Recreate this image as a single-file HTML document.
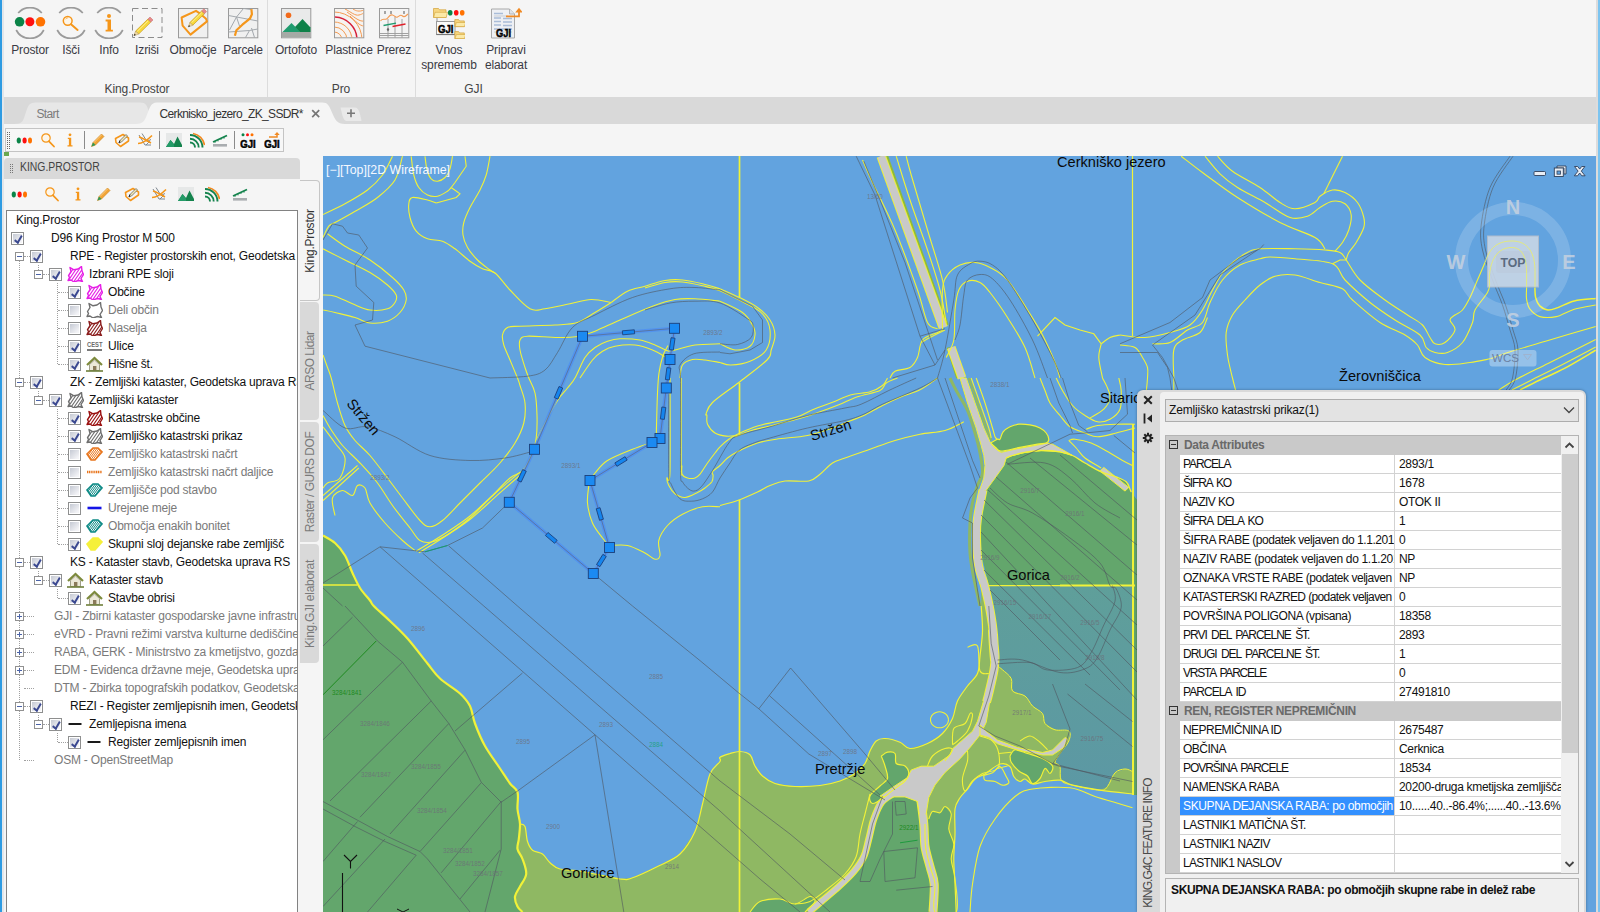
<!DOCTYPE html>
<html lang="sl">
<head>
<meta charset="utf-8">
<title>King.Prostor</title>
<style>
*{box-sizing:border-box;margin:0;padding:0}
html,body{width:1600px;height:912px;overflow:hidden;background:#f5f5f5;font-family:"Liberation Sans","DejaVu Sans",sans-serif;font-size:12px;color:#222}
.abs{position:absolute}
#frameL{left:0;top:0;width:2px;height:912px;background:#2e9be2}
#frameL2{left:2px;top:0;width:2px;height:912px;background:#e2e6ea}
#frameR{left:1598px;top:0;width:2px;height:912px;background:#7cc4f0}
#frameR2{left:1596px;top:0;width:2px;height:912px;background:#dcdcdc}
#ribbon{left:6px;top:0;width:1590px;height:97px;background:#f5f5f5}
.rb{position:absolute;top:0;text-align:center;font-size:12.4px;color:#333;line-height:15px;white-space:nowrap;transform:translateX(-50%)}
.rb svg{display:block;margin:8px auto 0;width:34px;height:34px}
.rb span{display:block;margin-top:1px}
.rsep{position:absolute;top:0;width:1px;height:97px;background:#dcdcdc}
.rgl{position:absolute;top:81.5px;font-size:12px;letter-spacing:-.1px;color:#444;transform:translateX(-50%);white-space:nowrap}
#tabbar{left:2px;top:97px;width:1594px;height:27px;background:#d9d9d9}
#toolrow{left:6px;top:124px;width:1590px;height:32px;background:#f5f5f5}
#tb1{left:4.5px;top:128px;width:279px;height:24px;background:#f7f7f7;border:1px solid #c4c4c4}
#lp{left:4px;top:156px;width:316px;height:756px;background:#f5f5f5}
#lphead{left:4px;top:158px;width:296px;height:21px;background:#d9d9d9;border-radius:4px 4px 0 0;font-size:12px;color:#444;line-height:19px;padding-left:15.500px}
#lphead span{display:inline-block;transform:scaleX(.868);transform-origin:0 50%;white-space:nowrap}
#tree{left:6px;top:210px;width:292px;height:702px;background:#fff;border:1px solid #828282;border-bottom:none;overflow:hidden}
.tr{position:absolute;height:18px;line-height:18px;font-size:12px;letter-spacing:-.2px;white-space:nowrap;color:#111}
.tr.g{color:#7a7a7a}
.cb{position:absolute;width:13px;height:13px;border:1px solid #8e8f8f;background:linear-gradient(135deg,#bfc4cf,#f4f4f7 80%)}
.cb{box-shadow:inset 0 0 0 1px #fff}
.cb.c::after{content:"";position:absolute;left:3.6px;top:1px;width:2.8px;height:6.6px;border:solid #3a4890;border-width:0 2px 2px 0;transform:rotate(38deg) skewX(8deg)}
.ex{position:absolute;width:9px;height:9px;border:1px solid #919191;background:#fff}
.ex::before{content:"";position:absolute;left:1px;top:3px;width:5px;height:1px;background:#4b63a7}
.ex.p::after{content:"";position:absolute;left:3px;top:1px;width:1px;height:5px;background:#4b63a7}
.dv{position:absolute;width:0;border-left:1px dotted #a0a0a0}
.dh{position:absolute;height:0;border-top:1px dotted #a0a0a0}
.stab{position:absolute;left:300px;width:19px;background:#d9d9d9;border-radius:0 4px 4px 0;color:#7a7a7a;font-size:12px;letter-spacing:-.2px}
.stab.act{width:20px;background:#f5f5f5;border:1px solid #c6c6c6;border-left:none;color:#333}
.stab span{position:absolute;left:50%;top:50%;white-space:nowrap;transform:translate(-50%,-50%) rotate(-90deg)}
#map{left:323px;top:156px;width:1273px;height:756px;background:#62a3df;overflow:hidden}
#fi{left:1137px;top:390px;width:449px;height:522px;background:#dadada;border-radius:6px 6px 0 0;box-shadow:0 0 3px rgba(0,0,0,.35)}
#fiin{left:1160px;top:392px;width:424px;height:520px;background:#f0f0f0;border-radius:4px 4px 0 0}
#combo{left:1165px;top:399px;width:414px;height:23px;background:#e3e3e3;border:1px solid #adadad;font-size:12px;letter-spacing:-.16px;line-height:21px;padding-left:3px;color:#111}
#grid{left:1165px;top:435px;width:414px;height:439px;background:#fff;border:1px solid #b4b4b4;overflow:hidden}
.gr{position:absolute;left:14px;width:381px;height:19px;border-bottom:1px solid #d2d2d2;font-size:12px;letter-spacing:-.42px;line-height:18px;color:#111;white-space:nowrap}
.gr b{position:absolute;left:0;top:0;width:215px;height:18px;padding-left:3px;overflow:hidden;font-weight:normal;border-right:1px solid #d2d2d2}
.gr i{letter-spacing:-.32px;position:absolute;left:216px;top:0;width:165px;height:18px;padding-left:3px;overflow:hidden;font-style:normal}
.gh{position:absolute;left:0;width:396px;height:19px;background:#c9c9c9;font-weight:bold;color:#6a6a6a;font-size:12px;letter-spacing:-.35px;line-height:18px;padding-left:18px;white-space:nowrap}
.gm{position:absolute;left:3px;top:4px;width:9px;height:9px;border:1px solid #333;background:#c9c9c9}
.gm::after{content:"";position:absolute;left:1px;top:3px;width:5px;height:1px;background:#333}
#desc{left:1165px;top:878px;width:414px;height:34px;background:#f0f0f0;border:1px solid #b4b4b4;border-bottom:none;font-weight:bold;font-size:12px;letter-spacing:-.37px;color:#111;padding:4px 0 0 5px;white-space:nowrap}

.rl{position:absolute;top:43px;text-align:center;font-size:12px;letter-spacing:-.15px;color:#3a3a44;line-height:15px;white-space:nowrap;transform:translateX(-50%)}
.dtab{font-size:12px;letter-spacing:-.64px;line-height:15px;white-space:nowrap}
.grip{width:3px;background-image:linear-gradient(#8a8a8a 1px,transparent 1px),linear-gradient(90deg,#8a8a8a 1px,transparent 1px);background-size:2px 2px;background-blend-mode:multiply;opacity:.0}
.ti{display:block}
.gr b.sel{background:#3390ff;color:#fff}
</style>
</head>
<body>
<div class="abs" id="ribbon"></div>
<div class="abs" id="tabbar"></div>
<div class="abs" id="toolrow"></div>
<div class="abs" id="lp"></div>
<div class="abs" id="lphead"><span>KING.PROSTOR</span></div>
<svg class="abs" style="left:14px;top:7px" width="32" height="32" viewBox="0 0 32 32"><path d="M4.2 6A15.5 15.5 0 0 1 27.8 6M2.2 23A15.5 15.5 0 0 0 29.8 23" fill="none" stroke="#9b9b9b" stroke-width="1.7"/><circle cx="5.6" cy="14.8" r="4.8" fill="#0b8448"/><circle cx="15.9" cy="14.8" r="4.5" fill="#ff1010"/><circle cx="26.5" cy="14.8" r="4.8" fill="#ff7200"/></svg>
<div class="rl" style="left:30px">Prostor</div>
<svg class="abs" style="left:55px;top:7px" width="32" height="32" viewBox="0 0 32 32"><path d="M4.2 6A15.5 15.5 0 0 1 27.8 6M2.2 23A15.5 15.5 0 0 0 29.8 23" fill="none" stroke="#9b9b9b" stroke-width="1.7"/><circle cx="12.7" cy="13.8" r="4.4" fill="#fdf6ea" stroke="#f5961a" stroke-width="1.5"/><path d="M16 17.3l6.6 5.6" stroke="#f5961a" stroke-width="2" stroke-linecap="round"/><path d="M10.6 12.3a2.6 2.6 0 0 1 2.2-1.4" stroke="#f5961a" stroke-width=".7" fill="none"/></svg>
<div class="rl" style="left:71px">Išči</div>
<svg class="abs" style="left:93px;top:7px" width="32" height="32" viewBox="0 0 32 32"><path d="M4.2 6A15.5 15.5 0 0 1 27.8 6M2.2 23A15.5 15.5 0 0 0 29.8 23" fill="none" stroke="#9b9b9b" stroke-width="1.7"/><circle cx="16" cy="9" r="2" fill="#f5961a"/><path d="M12.600 12.600h5.400v10.200h1.900v1.800h-7.300v-1.800h1.900v-8.400h-1.900z" fill="#f5961a"/></svg>
<div class="rl" style="left:109px">Info</div>
<svg class="abs" style="left:131px;top:7px" width="32" height="32" viewBox="0 0 32 32"><rect x="1.5" y="1.5" width="29.5" height="29" fill="none" stroke="#8c8c8c" stroke-width="1" stroke-dasharray="6 3.5"/><polygon points="4.6,24.1 16.9,12.1 19.8,15.1 7.6,27.1" fill="#f7d83a" stroke="#c89a1a" stroke-width=".7"/><polygon points="16.9,12.1 19.0,10.0 22.0,13.0 19.8,15.1" fill="#e88a8a" stroke="#c06a6a" stroke-width=".5"/><polygon points="2.8,28.8 4.6,24.1 7.6,27.1" fill="#f0d9a0" stroke="#a08040" stroke-width=".4"/><polygon points="2.8,28.8 3.6,26.7 4.9,28.0" fill="#222"/><path d="M6.3 24.3L17.1 13.8" stroke="#fdf0a0" stroke-width=".9"/></svg>
<div class="rl" style="left:147px">Izriši</div>
<svg class="abs" style="left:177px;top:7px" width="32" height="32" viewBox="0 0 32 32"><rect x="1.5" y="1.5" width="29.3" height="29.3" fill="#f0f0f0" stroke="#9a9a9a" stroke-width="1"/><path d="M4.6 10.5L19 3.8l3 2 7 6 1 2.6L13.5 27.6 5.6 18.6z" fill="none" stroke="#f5961a" stroke-width="2" stroke-linejoin="round"/><polygon points="12.9,15.5 24.7,3.9 27.5,6.7 15.7,18.3" fill="#f7d83a" stroke="#c89a1a" stroke-width=".7"/><polygon points="24.7,3.9 26.8,1.8 29.6,4.6 27.5,6.7" fill="#e88a8a" stroke="#c06a6a" stroke-width=".5"/><polygon points="11.2,20.0 12.9,15.5 15.7,18.3" fill="#f0d9a0" stroke="#a08040" stroke-width=".4"/><polygon points="11.2,20.0 12.0,18.0 13.2,19.2" fill="#222"/><path d="M14.5 15.7L24.9 5.5" stroke="#fdf0a0" stroke-width=".9"/></svg>
<div class="rl" style="left:193px">Območje</div>
<svg class="abs" style="left:227px;top:7px" width="32" height="32" viewBox="0 0 32 32"><rect x="1.5" y="1.5" width="29.3" height="29.3" fill="#f0f0f0" stroke="#9a9a9a" stroke-width="1"/><path d="M1.5 8.5L30.8 14M16.5 1.5l-7 8.5-7 13M9.5 10l3 9M1.5 25l21-1.5 8.3-1.5M22.5 23.5l-4 7M24.5 21l3 9.5M16.5 1.5l7.5 1M13 19.5l10-9" fill="none" stroke="#a3a8ad" stroke-width="1"/><path d="M24.4 2.2l.5 5-2 4.5-7.500 6-6 5.500-1.500 5.500" fill="none" stroke="#f5961a" stroke-width="2.2" stroke-linejoin="round"/></svg>
<div class="rl" style="left:243px">Parcele</div>
<svg class="abs" style="left:280px;top:7px" width="32" height="32" viewBox="0 0 32 32"><rect x="1.5" y="1.500" width="29.3" height="29.3" fill="#e9eaea" stroke="#9a9a9a"/><rect x="2" y="25" width="28.300" height="5.300" fill="#a5aaa6"/><circle cx="8.500" cy="8.200" r="2.800" fill="#f26a1b"/><path d="M2.500 25l9-9 9 9z" fill="#1f9b6e"/><path d="M15 20l7.500-8 8 8.500v4.500h-10.500z" fill="#0e8148"/></svg>
<div class="rl" style="left:296px">Ortofoto</div>
<svg class="abs" style="left:333px;top:7px" width="32" height="32" viewBox="0 0 32 32"><defs><clipPath id="cpl"><rect x="2" y="2" width="28.3" height="28.300"/></clipPath></defs><rect x="1.5" y="1.500" width="29.300" height="29.300" fill="#f6f3f0" stroke="#9a9a9a"/><g clip-path="url(#cpl)" fill="none" stroke="#f39a52" stroke-width="1"><circle cx="1" cy="33" r="8"/><circle cx="1" cy="33" r="13"/><circle cx="1" cy="33" r="18"/><circle cx="1" cy="33" r="28"/><circle cx="1" cy="33" r="23" stroke="#d6203a" stroke-width="1.500"/><path d="M12 2c6 3 10 7 14 6s4-2 5-2M20 2c3 2 6 3 11 1M14 5c6 4 12 10 17 9M17 9c5 5 10 10 14 10"/></g></svg>
<div class="rl" style="left:349px">Plastnice</div>
<svg class="abs" style="left:378px;top:7px" width="32" height="32" viewBox="0 0 32 32"><rect x="1.5" y="1.500" width="29.300" height="29.300" fill="#f4f4f4" stroke="#9a9a9a"/><path d="M7 4v3M13 4v3M26 4v3" stroke="#555" stroke-width="1"/><path d="M10 12v18.500M17 10v20.500M24 12v18.500M2 26.500h28.500M2 28.500h28.500" stroke="#999" stroke-width=".9" fill="none"/><path d="M2.500 14c2-3 4-1 6-2s3-5 6-4 3 3 5 2 3-3 5-1 3 0 5.500-2" fill="none" stroke="#f39a52" stroke-width="1.100"/><path d="M5.500 18.500l12.500-2.300" stroke="#1f9b6e" stroke-width="1.300"/><path d="M14.500 19.500l13-2.500" stroke="#e0202a" stroke-width="1.300"/><path d="M10 20.500l1.300 2-1.300 2-1.300-2z" fill="#666"/></svg>
<div class="rl" style="left:394px">Prerez</div>
<svg class="abs" style="left:433px;top:7px" width="32" height="32" viewBox="0 0 32 32"><path d="M4 10v5" stroke="#999" stroke-width="1"/><path d="M0.5 1.5h5.0l1 1.300h6.5v7.7h-12.5z" fill="#f6d680" stroke="#d2a23a" stroke-width=".700"/><path d="M2.0 5.3h12.5l-1.300 5.2h-12.5z" fill="#fbe9a6" stroke="#d2a23a" stroke-width=".600"/><ellipse cx="17.200" cy="5.800" rx="2.300" ry="2.800" fill="#0b8448"/><ellipse cx="23.200" cy="5.800" rx="2.300" ry="2.800" fill="#ff1010"/><ellipse cx="29.200" cy="5.800" rx="2.300" ry="2.800" fill="#ff7200"/><rect x="3.500" y="14.500" width="18.500" height="13" fill="#fafafa" stroke="#999" stroke-width="1"/><path d="M3.500 27.500h18.500" stroke="#777" stroke-width="1.200"/><text x="5.0" y="25.5" font-size="11.5" font-weight="bold" font-family="Liberation Sans,sans-serif" fill="#000" stroke="#000" stroke-width=".5" textLength="15.5" lengthAdjust="spacingAndGlyphs">GJI</text><path d="M21.8 12.6h3.8l1 1.300h4.7v5.7h-9.5z" fill="#f6d680" stroke="#d2a23a" stroke-width=".700"/><path d="M23.3 15.5h9.5l-1.300 4.1h-9.5z" fill="#fbe9a6" stroke="#d2a23a" stroke-width=".600"/><path d="M21.8 24.6h3.8l1 1.300h4.7v5.7h-9.5z" fill="#f6d680" stroke="#d2a23a" stroke-width=".700"/><path d="M23.3 27.5h9.5l-1.300 4.1h-9.5z" fill="#fbe9a6" stroke="#d2a23a" stroke-width=".600"/></svg>
<div class="rl" style="left:449px">Vnos<br>sprememb</div>
<svg class="abs" style="left:490px;top:7px" width="32" height="32" viewBox="0 0 32 32"><path d="M1.500 2h18l5 5v24h-23z" fill="#eef0f4" stroke="#a8a8a8" stroke-width="1"/><path d="M19.500 2v5h5" fill="#dfe3ea" stroke="#a8a8a8" stroke-width=".800"/><path d="M4 6.500h9M4 11h7M4 14.500h7M4 18h7M13 11.500h9M13 15h9M13 18.500h9M4 22h18" stroke="#a9bcd8" stroke-width="1.300"/><path d="M4 9h14M4 25h18" stroke="#c8ccd2" stroke-width="1"/><text x="6.0" y="29.5" font-size="11.5" font-weight="bold" font-family="Liberation Sans,sans-serif" fill="#000" stroke="#000" stroke-width=".5" textLength="15.0" lengthAdjust="spacingAndGlyphs">GJI</text><path d="M16 9.300h13V4.500" fill="none" stroke="#f08a24" stroke-width="1.800"/><path d="M25.200 5.500L29 .8l3.800 4.700z" fill="#f08a24"/></svg>
<div class="rl" style="left:506px">Pripravi<br>elaborat</div>
<div class="rsep" style="left:267px"></div>
<div class="rsep" style="left:415px"></div>
<div class="rgl" style="left:137px">King.Prostor</div>
<div class="rgl" style="left:341px">Pro</div>
<div class="rgl" style="left:473.5px">GJI</div>
<svg class="abs" style="left:0;top:97px" width="400" height="27" viewBox="0 97 400 27"><path d="M14 124c9 0 9-3 12-12s4-9.500 12-9.500H140c6 0 7 3 9 9.500s3 12 10 12z" fill="#e7e7e7"/><path d="M136 124c8 0 9-4 12-12s4-9.500 11-9.500H322c6 0 7 3 10 10s5 11.500 13 11.500z" fill="#f5f5f5"/><path d="M340.500 107.500h14c3 0 4 2 5 5s2 8.500 2 8.500h-14c-3 0-4-2-5-5.500s-2-8-2-8z" fill="#e9e9e9"/><path d="M312.200 110.200l7 7M319.200 110.200l-7 7" stroke="#777" stroke-width="1.700"/><path d="M347 113.300h8M351 109.300v8" stroke="#777" stroke-width="1.600"/></svg>
<div class="abs dtab" style="left:36.500px;top:106.5px;color:#7b7b7b">Start</div><div class="abs dtab" style="left:159.500px;top:106.5px;color:#333">Cerknisko_jezero_ZK_SSDR*</div>
<div class="abs" id="tb1"></div>
<svg class="abs" style="left:6px;top:131px" width="5" height="18" viewBox="0 0 5 18"><rect x="1" y="1" width="1" height="1" fill="#666"/><rect x="3" y="1" width="1" height="1" fill="#666"/><rect x="1" y="3" width="1" height="1" fill="#666"/><rect x="3" y="3" width="1" height="1" fill="#666"/><rect x="1" y="5" width="1" height="1" fill="#666"/><rect x="3" y="5" width="1" height="1" fill="#666"/><rect x="1" y="7" width="1" height="1" fill="#666"/><rect x="3" y="7" width="1" height="1" fill="#666"/><rect x="1" y="9" width="1" height="1" fill="#666"/><rect x="3" y="9" width="1" height="1" fill="#666"/><rect x="1" y="11" width="1" height="1" fill="#666"/><rect x="3" y="11" width="1" height="1" fill="#666"/><rect x="1" y="13" width="1" height="1" fill="#666"/><rect x="3" y="13" width="1" height="1" fill="#666"/><rect x="1" y="15" width="1" height="1" fill="#666"/><rect x="3" y="15" width="1" height="1" fill="#666"/><rect x="1" y="17" width="1" height="1" fill="#666"/><rect x="3" y="17" width="1" height="1" fill="#666"/></svg>
<svg class="abs" style="left:16px;top:132px" width="16" height="16" viewBox="0 0 16 16"><ellipse cx="2.800" cy="8.500" rx="2.100" ry="3" fill="#0b8448"/><ellipse cx="8.600" cy="8.500" rx="2.100" ry="3" fill="#ff1010"/><ellipse cx="14" cy="8.500" rx="2" ry="3" fill="#ff7200"/></svg>
<svg class="abs" style="left:39.5px;top:132px" width="16" height="16" viewBox="0 0 16 16"><circle cx="6" cy="6" r="4.200" fill="#fdf6ea" stroke="#f5961a" stroke-width="1.200"/><path d="M9 9.300l5 5.200" stroke="#f5961a" stroke-width="1.800" stroke-linecap="round"/></svg>
<svg class="abs" style="left:62px;top:132px" width="16" height="16" viewBox="0 0 16 16"><circle cx="8" cy="2.800" r="1.400" fill="#f5961a"/><path d="M5.800 5.800h3.400v7.400h1.300v1.300h-5v-1.300h1.400v-6.100h-1.100z" fill="#f5961a"/></svg>
<svg class="abs" style="left:90px;top:132px" width="16" height="16" viewBox="0 0 16 16"><polygon points="1.500,14.500 3,10.500 11.500,2 14,4.500 5.500,13" fill="#f2a436" stroke="#c8801a" stroke-width=".600"/><polygon points="1.500,14.500 3,10.500 5.500,13" fill="#2a9a5a"/><path d="M4 10.500l8-8" stroke="#fbd08a" stroke-width=".900"/></svg>
<svg class="abs" style="left:114px;top:132px" width="16" height="16" viewBox="0 0 16 16"><path d="M1.500 6.500L9 2.500l5.500 3.500v3L6.500 14.500 2 10.500z" fill="none" stroke="#f5961a" stroke-width="1.600" stroke-linejoin="round"/><polygon points="5,11 6,8.500 12,2.500 13.500,4 7.500,10" fill="#f7e9b0" stroke="#555" stroke-width=".700"/><path d="M5 11l1-2.500" stroke="#222" stroke-width="1"/></svg>
<svg class="abs" style="left:137px;top:132px" width="16" height="16" viewBox="0 0 16 16"><path d="M2 3l6 10h6M5 1.500l5 8 4-2M9 13l4-4" fill="none" stroke="#7d8790" stroke-width="1"/><path d="M1 11.500c4 0 9-3 14-8M2 5c4 1 8 4 12 6" fill="none" stroke="#f5961a" stroke-width="1.600"/></svg>
<svg class="abs" style="left:166px;top:132px" width="16" height="16" viewBox="0 0 16 16"><rect x="0" y="1" width="16" height="14" fill="#e6e8e8"/><path d="M0 15l4.500-7 3.500 4 3.500-7.500L16 13v2z" fill="#14834d"/><path d="M0 15l4.500-7 3.500 4.500V15z" fill="#249b68"/></svg>
<svg class="abs" style="left:189px;top:132px" width="16" height="16" viewBox="0 0 16 16"><path d="M1 10.500a5 5 0 0 1 5 5M1 6.800a8.700 8.700 0 0 1 8.700 8.700M1 3a12.500 12.500 0 0 1 12.500 12.500" fill="none" stroke="#14834d" stroke-width="1.900"/><path d="M4 1.500a14 14 0 0 1 11.500 11.500" fill="none" stroke="#f08a24" stroke-width="1.600"/></svg>
<svg class="abs" style="left:212px;top:132px" width="16" height="16" viewBox="0 0 16 16"><path d="M1 10l14-6.500" stroke="#14834d" stroke-width="1.800"/><path d="M3 9v2M6 7.500v2M9 6v2M12 4.800v2" stroke="#14834d" stroke-width=".800"/><rect x="1" y="12" width="14" height="2.600" fill="#a9adb0"/></svg>
<svg class="abs" style="left:240px;top:132px" width="16" height="16" viewBox="0 0 16 16"><circle cx="3" cy="2.800" r="1.500" fill="#0b8448"/><circle cx="7.500" cy="2.800" r="1.500" fill="#ff1010"/><circle cx="12" cy="2.800" r="1.500" fill="#ff7200"/><text x="0.300" y="15.500" font-size="10" font-weight="bold" font-family="Liberation Sans,sans-serif" fill="#000" stroke="#000" stroke-width=".500" textLength="15.400" lengthAdjust="spacingAndGlyphs">GJI</text></svg>
<svg class="abs" style="left:263.5px;top:132px" width="16" height="16" viewBox="0 0 16 16"><path d="M5 5h8V2.500" fill="none" stroke="#f08a24" stroke-width="1.500"/><path d="M10.300 3l2.700-3 2.700 3z" fill="#f08a24"/><text x="0.300" y="15.500" font-size="10" font-weight="bold" font-family="Liberation Sans,sans-serif" fill="#000" stroke="#000" stroke-width=".500" textLength="15.400" lengthAdjust="spacingAndGlyphs">GJI</text></svg>
<div class="abs" style="left:84px;top:131px;width:1px;height:18px;background:#8a8a8a"></div>
<div class="abs" style="left:159px;top:131px;width:1px;height:18px;background:#8a8a8a"></div>
<div class="abs" style="left:234px;top:131px;width:1px;height:18px;background:#8a8a8a"></div>
<div class="abs" style="left:4px;top:152px;width:4.500px;height:4px;background:#6aa84f"></div>
<svg class="abs" style="left:9px;top:163px" width="5" height="12" viewBox="0 0 5 12"><rect x="1" y="1" width="1" height="1" fill="#777"/><rect x="3" y="1" width="1" height="1" fill="#777"/><rect x="1" y="3" width="1" height="1" fill="#777"/><rect x="3" y="3" width="1" height="1" fill="#777"/><rect x="1" y="5" width="1" height="1" fill="#777"/><rect x="3" y="5" width="1" height="1" fill="#777"/><rect x="1" y="7" width="1" height="1" fill="#777"/><rect x="3" y="7" width="1" height="1" fill="#777"/><rect x="1" y="9" width="1" height="1" fill="#777"/><rect x="3" y="9" width="1" height="1" fill="#777"/></svg>
<svg class="abs" style="left:11px;top:186px" width="16" height="16" viewBox="0 0 16 16"><ellipse cx="2.800" cy="8.500" rx="2.100" ry="3" fill="#0b8448"/><ellipse cx="8.600" cy="8.500" rx="2.100" ry="3" fill="#ff1010"/><ellipse cx="14" cy="8.500" rx="2" ry="3" fill="#ff7200"/></svg>
<svg class="abs" style="left:44px;top:186px" width="16" height="16" viewBox="0 0 16 16"><circle cx="6" cy="6" r="4.200" fill="#fdf6ea" stroke="#f5961a" stroke-width="1.200"/><path d="M9 9.300l5 5.200" stroke="#f5961a" stroke-width="1.800" stroke-linecap="round"/></svg>
<svg class="abs" style="left:70px;top:186px" width="16" height="16" viewBox="0 0 16 16"><circle cx="8" cy="2.800" r="1.400" fill="#f5961a"/><path d="M5.800 5.800h3.400v7.400h1.300v1.300h-5v-1.300h1.400v-6.100h-1.100z" fill="#f5961a"/></svg>
<svg class="abs" style="left:96px;top:186px" width="16" height="16" viewBox="0 0 16 16"><polygon points="1.500,14.500 3,10.500 11.500,2 14,4.500 5.500,13" fill="#f2a436" stroke="#c8801a" stroke-width=".600"/><polygon points="1.500,14.500 3,10.500 5.500,13" fill="#2a9a5a"/><path d="M4 10.500l8-8" stroke="#fbd08a" stroke-width=".900"/></svg>
<svg class="abs" style="left:123.5px;top:186px" width="16" height="16" viewBox="0 0 16 16"><path d="M1.500 6.500L9 2.500l5.500 3.500v3L6.500 14.500 2 10.500z" fill="none" stroke="#f5961a" stroke-width="1.600" stroke-linejoin="round"/><polygon points="5,11 6,8.500 12,2.500 13.500,4 7.500,10" fill="#f7e9b0" stroke="#555" stroke-width=".700"/><path d="M5 11l1-2.500" stroke="#222" stroke-width="1"/></svg>
<svg class="abs" style="left:151px;top:186px" width="16" height="16" viewBox="0 0 16 16"><path d="M2 3l6 10h6M5 1.500l5 8 4-2M9 13l4-4" fill="none" stroke="#7d8790" stroke-width="1"/><path d="M1 11.500c4 0 9-3 14-8M2 5c4 1 8 4 12 6" fill="none" stroke="#f5961a" stroke-width="1.600"/></svg>
<svg class="abs" style="left:178px;top:186px" width="16" height="16" viewBox="0 0 16 16"><rect x="0" y="1" width="16" height="14" fill="#e6e8e8"/><path d="M0 15l4.500-7 3.500 4 3.500-7.500L16 13v2z" fill="#14834d"/><path d="M0 15l4.500-7 3.500 4.500V15z" fill="#249b68"/></svg>
<svg class="abs" style="left:204px;top:186px" width="16" height="16" viewBox="0 0 16 16"><path d="M1 10.500a5 5 0 0 1 5 5M1 6.800a8.700 8.700 0 0 1 8.700 8.700M1 3a12.500 12.500 0 0 1 12.500 12.500" fill="none" stroke="#14834d" stroke-width="1.900"/><path d="M4 1.500a14 14 0 0 1 11.500 11.500" fill="none" stroke="#f08a24" stroke-width="1.600"/></svg>
<svg class="abs" style="left:232px;top:186px" width="16" height="16" viewBox="0 0 16 16"><path d="M1 10l14-6.500" stroke="#14834d" stroke-width="1.800"/><path d="M3 9v2M6 7.500v2M9 6v2M12 4.800v2" stroke="#14834d" stroke-width=".800"/><rect x="1" y="12" width="14" height="2.600" fill="#a9adb0"/></svg>
<div class="abs" id="tree">
<div class="dv" style="left:12px;top:45px;height:504px"></div>
<div class="dh" style="left:17px;top:45px;width:6px"></div>
<div class="dh" style="left:17px;top:171px;width:6px"></div>
<div class="dh" style="left:17px;top:351px;width:6px"></div>
<div class="dh" style="left:17px;top:495px;width:6px"></div>
<div class="dh" style="left:17px;top:405px;width:10px"></div>
<div class="dh" style="left:17px;top:423px;width:10px"></div>
<div class="dh" style="left:17px;top:441px;width:10px"></div>
<div class="dh" style="left:17px;top:459px;width:10px"></div>
<div class="dh" style="left:17px;top:477px;width:10px"></div>
<div class="dh" style="left:17px;top:549px;width:10px"></div>
<div class="dh" style="left:4px;top:27px;width:3px"></div>
<div class="dv" style="left:31px;top:54px;height:9px"></div>
<div class="dv" style="left:31px;top:180px;height:9px"></div>
<div class="dv" style="left:31px;top:360px;height:9px"></div>
<div class="dv" style="left:31px;top:504px;height:9px"></div>
<div class="dh" style="left:36px;top:63px;width:6px"></div>
<div class="dh" style="left:36px;top:189px;width:6px"></div>
<div class="dh" style="left:36px;top:369px;width:6px"></div>
<div class="dh" style="left:36px;top:513px;width:6px"></div>
<div class="dv" style="left:50px;top:72px;height:81px"></div>
<div class="dv" style="left:50px;top:198px;height:135px"></div>
<div class="dv" style="left:50px;top:378px;height:9px"></div>
<div class="dv" style="left:50px;top:522px;height:9px"></div>
<div class="dh" style="left:51px;top:81px;width:10px"></div>
<div class="dh" style="left:51px;top:99px;width:10px"></div>
<div class="dh" style="left:51px;top:117px;width:10px"></div>
<div class="dh" style="left:51px;top:135px;width:10px"></div>
<div class="dh" style="left:51px;top:153px;width:10px"></div>
<div class="dh" style="left:51px;top:207px;width:10px"></div>
<div class="dh" style="left:51px;top:225px;width:10px"></div>
<div class="dh" style="left:51px;top:243px;width:10px"></div>
<div class="dh" style="left:51px;top:261px;width:10px"></div>
<div class="dh" style="left:51px;top:279px;width:10px"></div>
<div class="dh" style="left:51px;top:297px;width:10px"></div>
<div class="dh" style="left:51px;top:315px;width:10px"></div>
<div class="dh" style="left:51px;top:333px;width:10px"></div>
<div class="dh" style="left:51px;top:387px;width:10px"></div>
<div class="dh" style="left:51px;top:531px;width:10px"></div>
<div class="tr" style="left:9px;top:0px">King.Prostor</div>
<div class="cb c" style="left:4px;top:21px"></div>
<div class="tr" style="left:44px;top:18px">D96 King Prostor M 500</div>
<div class="ex" style="left:8px;top:41px"></div>
<div class="cb c" style="left:23px;top:39px"></div>
<div class="tr" style="left:63px;top:36px">RPE - Register prostorskih enot, Geodetska uprava RS</div>
<div class="ex" style="left:27px;top:59px"></div>
<div class="cb c" style="left:42px;top:57px"></div>
<div class="abs" style="left:60px;top:55px;width:17px;height:16px"><svg class="ti" width="17" height="16" viewBox="0 0 17 16"><defs><clipPath id="cbe61ee6"><path d="M1.500 9.500L4 5.500 3 1.500l4 2.300 4-.800L14.500.500l.500 4.500 1.500 3.500-2.500 4 1.500 3-4-1-4.500 1.500-3-2-3 .500 1.500-3z"/></clipPath></defs><g clip-path="url(#cbe61ee6)"><path d="M-9 16L2 0" stroke="#e61ee6" stroke-width="1.100"/><path d="M-5.9 16L5.1 0" stroke="#e61ee6" stroke-width="1.100"/><path d="M-2.8 16L8.2 0" stroke="#e61ee6" stroke-width="1.100"/><path d="M0.3 16L11.3 0" stroke="#e61ee6" stroke-width="1.100"/><path d="M3.4 16L14.4 0" stroke="#e61ee6" stroke-width="1.100"/><path d="M6.5 16L17.5 0" stroke="#e61ee6" stroke-width="1.100"/><path d="M9.6 16L20.6 0" stroke="#e61ee6" stroke-width="1.100"/><path d="M12.7 16L23.7 0" stroke="#e61ee6" stroke-width="1.100"/><path d="M15.8 16L26.8 0" stroke="#e61ee6" stroke-width="1.100"/></g><path d="M1.500 9.500L4 5.500 3 1.500l4 2.300 4-.800L14.500.500l.500 4.500 1.500 3.500-2.500 4 1.500 3-4-1-4.500 1.500-3-2-3 .500 1.500-3z" fill="none" stroke="#e61ee6" stroke-width="1.400" stroke-linejoin="round"/></svg></div>
<div class="tr" style="left:82px;top:54px">Izbrani RPE sloji</div>
<div class="cb c" style="left:61px;top:75px"></div>
<div class="abs" style="left:79px;top:73px;width:17px;height:16px"><svg class="ti" width="17" height="16" viewBox="0 0 17 16"><defs><clipPath id="cbe61ee6"><path d="M1.500 9.500L4 5.500 3 1.500l4 2.300 4-.800L14.500.500l.500 4.500 1.500 3.500-2.500 4 1.500 3-4-1-4.500 1.500-3-2-3 .500 1.500-3z"/></clipPath></defs><g clip-path="url(#cbe61ee6)"><path d="M-9 16L2 0" stroke="#e61ee6" stroke-width="1.100"/><path d="M-5.9 16L5.1 0" stroke="#e61ee6" stroke-width="1.100"/><path d="M-2.8 16L8.2 0" stroke="#e61ee6" stroke-width="1.100"/><path d="M0.3 16L11.3 0" stroke="#e61ee6" stroke-width="1.100"/><path d="M3.4 16L14.4 0" stroke="#e61ee6" stroke-width="1.100"/><path d="M6.5 16L17.5 0" stroke="#e61ee6" stroke-width="1.100"/><path d="M9.6 16L20.6 0" stroke="#e61ee6" stroke-width="1.100"/><path d="M12.7 16L23.7 0" stroke="#e61ee6" stroke-width="1.100"/><path d="M15.8 16L26.8 0" stroke="#e61ee6" stroke-width="1.100"/></g><path d="M1.500 9.500L4 5.500 3 1.500l4 2.300 4-.800L14.500.500l.500 4.500 1.500 3.500-2.500 4 1.500 3-4-1-4.500 1.500-3-2-3 .500 1.500-3z" fill="none" stroke="#e61ee6" stroke-width="1.400" stroke-linejoin="round"/></svg></div>
<div class="tr" style="left:101px;top:72px">Občine</div>
<div class="cb" style="left:61px;top:93px"></div>
<div class="abs" style="left:79px;top:91px;width:17px;height:16px"><svg class="ti" width="17" height="16" viewBox="0 0 17 16"><defs><clipPath id="cb6e6e6e"><path d="M1.500 9.500L4 5.500 3 1.500l4 2.300 4-.800L14.500.500l.500 4.500 1.500 3.500-2.500 4 1.500 3-4-1-4.500 1.500-3-2-3 .500 1.500-3z"/></clipPath></defs><g clip-path="url(#cb6e6e6e)"></g><path d="M1.500 9.500L4 5.500 3 1.500l4 2.300 4-.800L14.500.500l.500 4.500 1.500 3.500-2.500 4 1.500 3-4-1-4.500 1.500-3-2-3 .500 1.500-3z" fill="none" stroke="#6e6e6e" stroke-width="1.400" stroke-linejoin="round"/></svg></div>
<div class="tr g" style="left:101px;top:90px">Deli občin</div>
<div class="cb" style="left:61px;top:111px"></div>
<div class="abs" style="left:79px;top:109px;width:17px;height:16px"><svg class="ti" width="17" height="16" viewBox="0 0 17 16"><defs><clipPath id="cb8a1c1c"><path d="M1.500 9.500L4 5.500 3 1.500l4 2.300 4-.800L14.500.500l.500 4.500 1.500 3.500-2.500 4 1.500 3-4-1-4.500 1.500-3-2-3 .500 1.500-3z"/></clipPath></defs><g clip-path="url(#cb8a1c1c)"><path d="M-9 16L2 0" stroke="#8a1c1c" stroke-width="1.100"/><path d="M-5.9 16L5.1 0" stroke="#8a1c1c" stroke-width="1.100"/><path d="M-2.8 16L8.2 0" stroke="#8a1c1c" stroke-width="1.100"/><path d="M0.3 16L11.3 0" stroke="#8a1c1c" stroke-width="1.100"/><path d="M3.4 16L14.4 0" stroke="#8a1c1c" stroke-width="1.100"/><path d="M6.5 16L17.5 0" stroke="#8a1c1c" stroke-width="1.100"/><path d="M9.6 16L20.6 0" stroke="#8a1c1c" stroke-width="1.100"/><path d="M12.7 16L23.7 0" stroke="#8a1c1c" stroke-width="1.100"/><path d="M15.8 16L26.8 0" stroke="#8a1c1c" stroke-width="1.100"/></g><path d="M1.500 9.500L4 5.500 3 1.500l4 2.300 4-.800L14.500.500l.500 4.500 1.500 3.500-2.500 4 1.500 3-4-1-4.500 1.500-3-2-3 .500 1.500-3z" fill="none" stroke="#8a1c1c" stroke-width="1.400" stroke-linejoin="round"/></svg></div>
<div class="tr g" style="left:101px;top:108px">Naselja</div>
<div class="cb c" style="left:61px;top:129px"></div>
<div class="abs" style="left:79px;top:127px;width:17px;height:16px"><svg class="ti" width="17" height="16" viewBox="0 0 17 16"><text x="1" y="8.500" font-size="7" font-family="Liberation Sans,sans-serif" font-weight="bold" fill="#6a6a6a" textLength="15.500" lengthAdjust="spacingAndGlyphs">CEST</text><path d="M1 12h15" stroke="#7a7a7a" stroke-width="2"/></svg></div>
<div class="tr" style="left:101px;top:126px">Ulice</div>
<div class="cb c" style="left:61px;top:147px"></div>
<div class="abs" style="left:79px;top:145px;width:17px;height:16px"><svg class="ti" width="17" height="16" viewBox="0 0 17 16"><path d="M1 9l7.5-7L16 9" fill="none" stroke="#7d8a3c" stroke-width="2.2"/><path d="M3.5 8.5v6h10v-6L8.5 4z" fill="#ece9d8" stroke="#8a8a70" stroke-width=".8"/><rect x="7" y="10" width="3.4" height="4.5" fill="#8a7a5a"/><path d="M0 15h17" stroke="#6f7f3a" stroke-width="1.6"/></svg></div>
<div class="tr" style="left:101px;top:144px">Hišne št.</div>
<div class="ex" style="left:8px;top:167px"></div>
<div class="cb c" style="left:23px;top:165px"></div>
<div class="tr" style="left:63px;top:162px">ZK - Zemljiški kataster, Geodetska uprava RS</div>
<div class="ex" style="left:27px;top:185px"></div>
<div class="cb c" style="left:42px;top:183px"></div>
<div class="abs" style="left:60px;top:181px;width:17px;height:16px"><svg class="ti" width="17" height="16" viewBox="0 0 17 16"><defs><clipPath id="cb6e6e6e"><path d="M1.500 9.500L4 5.500 3 1.500l4 2.300 4-.800L14.500.500l.500 4.500 1.500 3.500-2.500 4 1.500 3-4-1-4.500 1.500-3-2-3 .500 1.500-3z"/></clipPath></defs><g clip-path="url(#cb6e6e6e)"><path d="M-9 16L2 0" stroke="#6e6e6e" stroke-width="1.100"/><path d="M-5.9 16L5.1 0" stroke="#6e6e6e" stroke-width="1.100"/><path d="M-2.8 16L8.2 0" stroke="#6e6e6e" stroke-width="1.100"/><path d="M0.3 16L11.3 0" stroke="#6e6e6e" stroke-width="1.100"/><path d="M3.4 16L14.4 0" stroke="#6e6e6e" stroke-width="1.100"/><path d="M6.5 16L17.5 0" stroke="#6e6e6e" stroke-width="1.100"/><path d="M9.6 16L20.6 0" stroke="#6e6e6e" stroke-width="1.100"/><path d="M12.7 16L23.7 0" stroke="#6e6e6e" stroke-width="1.100"/><path d="M15.8 16L26.8 0" stroke="#6e6e6e" stroke-width="1.100"/></g><path d="M1.500 9.500L4 5.500 3 1.500l4 2.300 4-.800L14.500.500l.500 4.500 1.500 3.500-2.500 4 1.500 3-4-1-4.500 1.500-3-2-3 .500 1.500-3z" fill="none" stroke="#6e6e6e" stroke-width="1.400" stroke-linejoin="round"/></svg></div>
<div class="tr" style="left:82px;top:180px">Zemljiški kataster</div>
<div class="cb c" style="left:61px;top:201px"></div>
<div class="abs" style="left:79px;top:199px;width:17px;height:16px"><svg class="ti" width="17" height="16" viewBox="0 0 17 16"><defs><clipPath id="cb9a1010"><path d="M1.500 9.500L4 5.500 3 1.500l4 2.300 4-.800L14.500.500l.500 4.500 1.500 3.500-2.500 4 1.500 3-4-1-4.500 1.500-3-2-3 .500 1.500-3z"/></clipPath></defs><g clip-path="url(#cb9a1010)"><path d="M-9 16L2 0" stroke="#9a1010" stroke-width="1.100"/><path d="M-5.9 16L5.1 0" stroke="#9a1010" stroke-width="1.100"/><path d="M-2.8 16L8.2 0" stroke="#9a1010" stroke-width="1.100"/><path d="M0.3 16L11.3 0" stroke="#9a1010" stroke-width="1.100"/><path d="M3.4 16L14.4 0" stroke="#9a1010" stroke-width="1.100"/><path d="M6.5 16L17.5 0" stroke="#9a1010" stroke-width="1.100"/><path d="M9.6 16L20.6 0" stroke="#9a1010" stroke-width="1.100"/><path d="M12.7 16L23.7 0" stroke="#9a1010" stroke-width="1.100"/><path d="M15.8 16L26.8 0" stroke="#9a1010" stroke-width="1.100"/></g><path d="M1.500 9.500L4 5.500 3 1.500l4 2.300 4-.800L14.500.500l.500 4.500 1.500 3.500-2.500 4 1.500 3-4-1-4.500 1.500-3-2-3 .500 1.500-3z" fill="none" stroke="#9a1010" stroke-width="1.400" stroke-linejoin="round"/></svg></div>
<div class="tr" style="left:101px;top:198px">Katastrske občine</div>
<div class="cb c" style="left:61px;top:219px"></div>
<div class="abs" style="left:79px;top:217px;width:17px;height:16px"><svg class="ti" width="17" height="16" viewBox="0 0 17 16"><defs><clipPath id="cb6e6e6e"><path d="M1.500 9.500L4 5.500 3 1.500l4 2.300 4-.800L14.500.500l.500 4.500 1.500 3.500-2.500 4 1.500 3-4-1-4.500 1.500-3-2-3 .500 1.500-3z"/></clipPath></defs><g clip-path="url(#cb6e6e6e)"><path d="M-9 16L2 0" stroke="#6e6e6e" stroke-width="1.100"/><path d="M-5.9 16L5.1 0" stroke="#6e6e6e" stroke-width="1.100"/><path d="M-2.8 16L8.2 0" stroke="#6e6e6e" stroke-width="1.100"/><path d="M0.3 16L11.3 0" stroke="#6e6e6e" stroke-width="1.100"/><path d="M3.4 16L14.4 0" stroke="#6e6e6e" stroke-width="1.100"/><path d="M6.5 16L17.5 0" stroke="#6e6e6e" stroke-width="1.100"/><path d="M9.6 16L20.6 0" stroke="#6e6e6e" stroke-width="1.100"/><path d="M12.7 16L23.7 0" stroke="#6e6e6e" stroke-width="1.100"/><path d="M15.8 16L26.8 0" stroke="#6e6e6e" stroke-width="1.100"/></g><path d="M1.500 9.500L4 5.500 3 1.500l4 2.300 4-.800L14.500.500l.500 4.500 1.500 3.500-2.500 4 1.500 3-4-1-4.500 1.500-3-2-3 .500 1.500-3z" fill="none" stroke="#6e6e6e" stroke-width="1.400" stroke-linejoin="round"/></svg></div>
<div class="tr" style="left:101px;top:216px">Zemljiško katastrski prikaz</div>
<div class="cb" style="left:61px;top:237px"></div>
<div class="abs" style="left:79px;top:235px;width:17px;height:16px"><svg class="ti" width="17" height="16" viewBox="0 0 17 16"><defs><clipPath id="cde8761e"><path d="M1 8l6-6h5l4 4-7 8H5z"/></clipPath></defs><g clip-path="url(#cde8761e)"><path d="M-6 15L4 1" stroke="#e8761e" stroke-width="1"/><path d="M-4 15L6 1" stroke="#e8761e" stroke-width="1"/><path d="M-2 15L8 1" stroke="#e8761e" stroke-width="1"/><path d="M0 15L10 1" stroke="#e8761e" stroke-width="1"/><path d="M2 15L12 1" stroke="#e8761e" stroke-width="1"/><path d="M4 15L14 1" stroke="#e8761e" stroke-width="1"/><path d="M6 15L16 1" stroke="#e8761e" stroke-width="1"/><path d="M8 15L18 1" stroke="#e8761e" stroke-width="1"/><path d="M10 15L20 1" stroke="#e8761e" stroke-width="1"/><path d="M12 15L22 1" stroke="#e8761e" stroke-width="1"/></g><path d="M1 8l6-6h5l4 4-7 8H5z" fill="none" stroke="#e8761e" stroke-width="1.6"/></svg></div>
<div class="tr g" style="left:101px;top:234px">Zemljiško katastrski načrt</div>
<div class="cb" style="left:61px;top:255px"></div>
<div class="abs" style="left:79px;top:253px;width:17px;height:16px"><svg class="ti" width="17" height="16" viewBox="0 0 17 16"><path d="M1 8h15" stroke="#e8761e" stroke-width="2.4" stroke-dasharray="1.2 .6"/></svg></div>
<div class="tr g" style="left:101px;top:252px">Zemljiško katastrski načrt daljice</div>
<div class="cb" style="left:61px;top:273px"></div>
<div class="abs" style="left:79px;top:271px;width:17px;height:16px"><svg class="ti" width="17" height="16" viewBox="0 0 17 16"><defs><clipPath id="cd0e8a86"><path d="M1 8l6-6h5l4 4-7 8H5z"/></clipPath></defs><g clip-path="url(#cd0e8a86)"><path d="M-6 15L4 1" stroke="#0e8a86" stroke-width="1"/><path d="M-4 15L6 1" stroke="#0e8a86" stroke-width="1"/><path d="M-2 15L8 1" stroke="#0e8a86" stroke-width="1"/><path d="M0 15L10 1" stroke="#0e8a86" stroke-width="1"/><path d="M2 15L12 1" stroke="#0e8a86" stroke-width="1"/><path d="M4 15L14 1" stroke="#0e8a86" stroke-width="1"/><path d="M6 15L16 1" stroke="#0e8a86" stroke-width="1"/><path d="M8 15L18 1" stroke="#0e8a86" stroke-width="1"/><path d="M10 15L20 1" stroke="#0e8a86" stroke-width="1"/><path d="M12 15L22 1" stroke="#0e8a86" stroke-width="1"/></g><path d="M1 8l6-6h5l4 4-7 8H5z" fill="none" stroke="#0e8a86" stroke-width="1.6"/></svg></div>
<div class="tr g" style="left:101px;top:270px">Zemljišče pod stavbo</div>
<div class="cb" style="left:61px;top:291px"></div>
<div class="abs" style="left:79px;top:289px;width:17px;height:16px"><svg class="ti" width="17" height="16" viewBox="0 0 17 16"><path d="M1.5 8h14" stroke="#1414e6" stroke-width="2.6"/></svg></div>
<div class="tr g" style="left:101px;top:288px">Urejene meje</div>
<div class="cb" style="left:61px;top:309px"></div>
<div class="abs" style="left:79px;top:307px;width:17px;height:16px"><svg class="ti" width="17" height="16" viewBox="0 0 17 16"><defs><clipPath id="cd0e8a86"><path d="M1 8l6-6h5l4 4-7 8H5z"/></clipPath></defs><g clip-path="url(#cd0e8a86)"><path d="M-6 15L4 1" stroke="#0e8a86" stroke-width="1"/><path d="M-4 15L6 1" stroke="#0e8a86" stroke-width="1"/><path d="M-2 15L8 1" stroke="#0e8a86" stroke-width="1"/><path d="M0 15L10 1" stroke="#0e8a86" stroke-width="1"/><path d="M2 15L12 1" stroke="#0e8a86" stroke-width="1"/><path d="M4 15L14 1" stroke="#0e8a86" stroke-width="1"/><path d="M6 15L16 1" stroke="#0e8a86" stroke-width="1"/><path d="M8 15L18 1" stroke="#0e8a86" stroke-width="1"/><path d="M10 15L20 1" stroke="#0e8a86" stroke-width="1"/><path d="M12 15L22 1" stroke="#0e8a86" stroke-width="1"/></g><path d="M1 8l6-6h5l4 4-7 8H5z" fill="none" stroke="#0e8a86" stroke-width="1.6"/></svg></div>
<div class="tr g" style="left:101px;top:306px">Območja enakih bonitet</div>
<div class="cb c" style="left:61px;top:327px"></div>
<div class="abs" style="left:79px;top:325px;width:17px;height:16px"><svg class="ti" width="17" height="16" viewBox="0 0 17 16"><defs><clipPath id="cdf5f03a"><path d="M1 8l6-6h5l4 4-7 8H5z"/></clipPath></defs><g clip-path="url(#cdf5f03a)"></g><path d="M1 8l6-6h5l4 4-7 8H5z" fill="#f5f03a" stroke="#f5f03a" stroke-width="1.6"/></svg></div>
<div class="tr" style="left:101px;top:324px">Skupni sloj dejanske rabe zemljišč</div>
<div class="ex" style="left:8px;top:347px"></div>
<div class="cb c" style="left:23px;top:345px"></div>
<div class="tr" style="left:63px;top:342px">KS - Kataster stavb, Geodetska uprava RS</div>
<div class="ex" style="left:27px;top:365px"></div>
<div class="cb c" style="left:42px;top:363px"></div>
<div class="abs" style="left:60px;top:361px;width:17px;height:16px"><svg class="ti" width="17" height="16" viewBox="0 0 17 16"><path d="M1 9l7.5-7L16 9" fill="none" stroke="#7d8a3c" stroke-width="2.2"/><path d="M3.5 8.5v6h10v-6L8.5 4z" fill="#ece9d8" stroke="#8a8a70" stroke-width=".8"/><rect x="7" y="10" width="3.4" height="4.5" fill="#8a7a5a"/><path d="M0 15h17" stroke="#6f7f3a" stroke-width="1.6"/></svg></div>
<div class="tr" style="left:82px;top:360px">Kataster stavb</div>
<div class="cb c" style="left:61px;top:381px"></div>
<div class="abs" style="left:79px;top:379px;width:17px;height:16px"><svg class="ti" width="17" height="16" viewBox="0 0 17 16"><path d="M1 9l7.5-7L16 9" fill="none" stroke="#7d8a3c" stroke-width="2.2"/><path d="M3.5 8.5v6h10v-6L8.5 4z" fill="#ece9d8" stroke="#8a8a70" stroke-width=".8"/><rect x="7" y="10" width="3.4" height="4.5" fill="#8a7a5a"/><path d="M0 15h17" stroke="#6f7f3a" stroke-width="1.6"/></svg></div>
<div class="tr" style="left:101px;top:378px">Stavbe obrisi</div>
<div class="ex p" style="left:8px;top:401px"></div>
<div class="tr g" style="left:47px;top:396px">GJI - Zbirni kataster gospodarske javne infrastrukture</div>
<div class="ex p" style="left:8px;top:419px"></div>
<div class="tr g" style="left:47px;top:414px">eVRD - Pravni režimi varstva kulturne dediščine</div>
<div class="ex p" style="left:8px;top:437px"></div>
<div class="tr g" style="left:47px;top:432px">RABA, GERK - Ministrstvo za kmetijstvo, gozdarstvo</div>
<div class="ex p" style="left:8px;top:455px"></div>
<div class="tr g" style="left:47px;top:450px">EDM - Evidenca državne meje, Geodetska uprava RS</div>
<div class="tr g" style="left:47px;top:468px">DTM - Zbirka topografskih podatkov, Geodetska uprava</div>
<div class="ex" style="left:8px;top:491px"></div>
<div class="cb c" style="left:23px;top:489px"></div>
<div class="tr" style="left:63px;top:486px">REZI - Register zemljepisnih imen, Geodetska uprava</div>
<div class="ex" style="left:27px;top:509px"></div>
<div class="cb c" style="left:42px;top:507px"></div>
<div class="abs" style="left:60px;top:505px;width:17px;height:16px"><svg class="ti" width="17" height="16" viewBox="0 0 17 16"><path d="M1.5 8h13" stroke="#000" stroke-width="1.8"/></svg></div>
<div class="tr" style="left:82px;top:504px">Zemljepisna imena</div>
<div class="cb c" style="left:61px;top:525px"></div>
<div class="abs" style="left:79px;top:523px;width:17px;height:16px"><svg class="ti" width="17" height="16" viewBox="0 0 17 16"><path d="M1.5 8h13" stroke="#000" stroke-width="1.8"/></svg></div>
<div class="tr" style="left:101px;top:522px">Register zemljepisnih imen</div>
<div class="tr g" style="left:47px;top:540px">OSM - OpenStreetMap</div>
</div>
<div class="stab act" style="top:180px;height:121px"><span>King.Prostor</span></div>
<div class="stab" style="top:302px;height:118px"><span style="letter-spacing:-0.51px">ARSO Lidar</span></div>
<div class="stab" style="top:422px;height:120px"><span style="letter-spacing:-0.48px">Raster / GURS DOF</span></div>
<div class="stab" style="top:544px;height:119px"><span style="letter-spacing:-0.28px">King.GJI elaborat</span></div>
<div class="abs" id="map">
<svg id="mapsvg" width="1273" height="756" viewBox="323 156 1273 756">
<defs><linearGradient id="tg" x1="0" y1="0" x2="0" y2="1"><stop offset="0" stop-color="#5f9f9a"/><stop offset="1" stop-color="#5c98a4"/></linearGradient></defs>
<path d="M520 824 L525 826.5 L527.5 841.5 L532.5 850.2 L542.5 854 L550 862.8 L560 869 L582.5 871.5 L620 879 L632.5 877.8 L657.5 866.5 L680 854 L695 831.5 L702.5 804 L710 774 L720 761.5 L720 757.2 L730 753.5 L740 751.5 L750 754.8 L755 766 L762.5 776 L775 783.5 L795 786.5 L820 785.5 L840 781 L855 773.5 L865 763.5 L870 751 L876.2 741 L885 738.5 L900 742.2 L910 748.5 L927.5 743.5 L942.5 733.5 L952.5 718.5 L957.5 701 L967.5 686 L977.5 673.5 L980 656 L982.5 631 L981.2 606 L981 585 L1137 585 L1137 795 L1132.5 794 L1100 790.2 L1072.5 785.2 L1060 780.2 L1045 781.5 L1032.5 784 L1025 779 L1020 781.5 L1013.8 776.5 L1010 766.5 L1000 764 L985 774 L975 779 L967.5 789 L960 797.8 L955 809 L955 834 L953.8 859 L955 884 L956.2 912 L522.5 912 L517.5 906.5 L515 896.5 L520 886.5 L526.2 874 L522.5 859 L517.5 849 L518.8 839 L520 824 L517.5 809Z" fill="#8fb863"/>
<path d="M323 535.5 L335 543 L345 555.5 L352.5 573 L360 588 L370 600.5 L373.8 606 L390 621 L407.5 638.5 L427.5 663.5 L440 678.5 L460 693.5 L470 706 L475 723.5 L485 746 L500 768.5 L510 783.5 L517.5 792.2 L517.5 809 L520 824 L518.8 839 L517.5 849 L522.5 859 L526.2 874 L520 886.5 L515 896.5 L517.5 906.5 L522.5 912 L323 912 L323 535Z" fill="#63a66c"/>
<path d="M1006.2 458 L1012.5 455.5 L1025 452.4 L1041.2 450.5 L1060 451.8 L1072.5 455.5 L1085 463 L1101.2 471.8 L1116.2 476.8 L1126.2 481.8 L1130 489.2 L1131.2 492 L1137 500 L1137 795 L1133 795 L1133 585.6 L988.8 585.6 L981 553 L981 523 L985 498 L986 490.5 L996 476.8 L1004 465.5Z" fill="#63a66c"/>
<path d="M990.6 443 C990.8 441.5 995.9 439.8 997.5 439.2 C999.1 438.6 999.1 440.4 1000 439.2 C1000.9 438.0 1001.4 433.9 1003.1 431.8 C1004.8 429.7 1007.4 428.1 1010 426.8 C1012.6 425.5 1015.5 424.5 1018.8 424.2 C1022.1 423.9 1026.5 424.3 1030 424.9 C1033.5 425.5 1037.3 426.6 1040 428 C1042.7 429.4 1044.7 431.1 1046.2 433 C1047.7 434.9 1048.8 437.5 1048.8 439.2 C1048.8 440.9 1048.1 442.2 1046.2 443 C1044.3 443.8 1041.9 443.5 1037.5 444.2 C1033.1 444.9 1026.0 446.2 1020 447.4 C1014.0 448.5 1005.2 451.0 1001.2 451.1 C997.2 451.2 998.0 449.4 996.2 448 C994.4 446.6 990.4 444.5 990.6 443Z" fill="#63a66c"/>
<path d="M881.2 756 C881.6 753.7 885.2 752.6 887.5 752.2 C889.8 751.8 893.5 751.6 895 753.5 C896.5 755.4 894.5 761.4 896.2 763.5 C897.9 765.6 902.9 764.3 905 766 C907.1 767.7 908.8 771.0 908.8 773.5 C908.8 776.0 907.3 778.5 905 781 C902.7 783.5 898.8 785.6 895 788.5 C891.2 791.4 886.2 796.0 882.5 798.5 C878.8 801.0 874.6 803.9 872.5 803.5 C870.4 803.1 868.8 798.9 870 796 C871.2 793.1 877.1 788.9 880 786 C882.9 783.1 886.7 781.8 887.5 778.5 C888.3 775.2 886.0 769.8 885 766 C884.0 762.2 880.8 758.3 881.2 756Z" fill="#63a66c"/>
<path d="M1010 756 C1010.6 753.9 1012.1 750.2 1015 749.8 C1017.9 749.4 1022.9 752.0 1027.5 753.5 C1032.1 755.0 1038.3 756.4 1042.5 758.5 C1046.7 760.6 1051.2 763.5 1052.5 766 C1053.8 768.5 1051.2 773.1 1050 773.5 C1048.8 773.9 1046.7 767.7 1045 768.5 C1043.3 769.3 1042.1 776.0 1040 778.5 C1037.9 781.0 1034.6 783.9 1032.5 783.5 C1030.4 783.1 1029.8 778.1 1027.5 776 C1025.2 773.9 1021.5 773.3 1018.8 771 C1016.1 768.7 1012.7 764.7 1011.2 762.2 C1009.7 759.7 1009.4 758.1 1010 756Z" fill="#63a66c"/>
<path d="M892.5 796.5 L905 796.5 L917.5 801.5 L922.5 824 L923.8 846.5 L928.8 866.5 L932.5 884 L930 912 L815 912 L837.5 891.5 L855 874 L865 859 L870 839 L875 819 L882.5 804Z" fill="#63a66c"/>
<path d="M928.8 819 L932.5 811.5 L940 812.8 L945 806.5 L951.2 814 L948.8 829 L953.8 844 L951.2 859 L955 879 L956.2 912 L935 912 L935 884 L930 866.5 L925.5 846.5 L925 824Z" fill="#63a66c"/>
<path d="M750 912 L760 901.5 L780 899 L795 904 L810 896.5 L815 901.5 L805 912Z" fill="#63a66c"/>
<path d="M988.8 585.6 L993.8 610 L996.9 635 L993.8 606 L995 631 L997.5 666 L1002.5 669.8 L1011.2 678.5 L1012.5 691 L1025 696 L1032.5 706 L1042.5 713.5 L1045 723.5 L1055 729.8 L1068.8 731 L1068.8 741 L1060 753.5 L1055 762.2 L1060 766.5 L1061.2 780.2 L1072.5 785.2 L1100 790.2 L1107.5 786.5 L1115 772.8 L1125 769 L1132.5 771.5 L1133 771 L1133 585.6Z" fill="url(#tg)"/>
<path d="M983.8 775.2 C985.0 774.0 989.8 774.2 992.5 772.8 C995.2 771.3 997.7 765.9 1000 766.5 C1002.3 767.1 1004.7 773.8 1006.2 776.5 C1007.7 779.2 1009.4 781.3 1008.8 782.8 C1008.2 784.2 1004.8 785.4 1002.5 785.2 C1000.2 785.0 997.9 782.3 995 781.5 C992.1 780.7 986.9 781.2 985 780.2 C983.1 779.2 982.5 776.4 983.8 775.2Z" fill="#62a3df"/>
<path d="M950 378 C951.0 380.1 953.3 385.1 956.2 390.5 C959.1 395.9 964.4 403.4 967.5 410.5 C970.6 417.6 972.9 425.9 975 433 C977.1 440.1 978.8 446.3 980 453 C981.2 459.7 982.9 467.6 982.5 473 C982.1 478.4 979.2 480.5 977.5 485.5 C975.8 490.5 973.8 496.8 972.5 503 C971.2 509.2 970.4 514.7 970 523 C969.6 531.3 969.4 543.8 970 553 C970.6 562.2 972.1 569.2 973.8 578 C975.5 586.8 979.0 601.3 980 606" fill="none" stroke="#8fb863" stroke-width="3"/>
<path d="M887 156.2 L947.5 325" fill="none" stroke="#8fba3a" stroke-width="2.5"/>
<path d="M948 347.5 L957.5 378" fill="none" stroke="#8fba3a" stroke-width="3"/>
<path d="M968.8 378 C970.2 382.2 974.6 394.7 977.5 403 C980.4 411.3 983.9 421.8 986.2 428 C988.5 434.2 990.4 438.4 991.2 440.5" fill="none" stroke="#8fb863" stroke-width="2.5"/>
<path d="M881.2 156.2 L943.2 327.5" fill="none" stroke="#f1f238" stroke-width="9.5" stroke-linecap="butt"/>
<path d="M881.2 156.2 L943.2 327.5" fill="none" stroke="#c9c9c9" stroke-width="7.5" stroke-linecap="butt"/>
<path d="M951.2 347.5 L962 378" fill="none" stroke="#f1f238" stroke-width="9" stroke-linecap="butt"/>
<path d="M951.2 347.5 L962 378" fill="none" stroke="#c9c9c9" stroke-width="7" stroke-linecap="butt"/>
<path d="M983 490 C982.1 494.7 978.6 510.0 977.5 518 C976.4 526.0 976.3 530.1 976.5 538 C976.7 545.9 977.2 557.6 978.5 565.5 C979.8 573.4 982.6 578.1 984.5 585.5 C986.4 592.9 988.5 601.8 990 610 C991.5 618.2 992.8 626.7 993.5 635 C994.2 643.3 994.7 660.7 994.5 660 C994.3 659.3 992.4 631.7 992.5 631 C992.6 630.3 994.8 649.3 995 656 C995.2 662.7 994.8 664.8 993.8 671 C992.8 677.2 990.0 688.3 988.8 693.5 C987.6 698.7 986.9 700.6 986.5 702" fill="none" stroke="#f1f238" stroke-width="9" stroke-linecap="butt"/>
<path d="M983 490 C982.1 494.7 978.6 510.0 977.5 518 C976.4 526.0 976.3 530.1 976.5 538 C976.7 545.9 977.2 557.6 978.5 565.5 C979.8 573.4 982.6 578.1 984.5 585.5 C986.4 592.9 988.5 601.8 990 610 C991.5 618.2 992.8 626.7 993.5 635 C994.2 643.3 994.7 660.7 994.5 660 C994.3 659.3 992.4 631.7 992.5 631 C992.6 630.3 994.8 649.3 995 656 C995.2 662.7 994.8 664.8 993.8 671 C992.8 677.2 990.0 688.3 988.8 693.5 C987.6 698.7 986.9 700.6 986.5 702" fill="none" stroke="#c9c9c9" stroke-width="7" stroke-linecap="butt"/>
<path d="M892.5 794 C890.6 795.5 884.3 798.6 881.2 802.8 C878.1 807.0 875.9 813.0 873.8 819 C871.7 825.0 870.5 832.8 868.8 839 C867.1 845.2 866.3 851.1 863.8 856.5 C861.3 861.9 858.0 866.5 853.8 871.5 C849.6 876.5 844.2 881.5 838.8 886.5 C833.4 891.5 826.2 897.2 821.2 901.5 C816.2 905.8 810.9 910.2 808.8 912" fill="none" stroke="#f1f238" stroke-width="7" stroke-linecap="butt"/>
<path d="M892.5 794 C890.6 795.5 884.3 798.6 881.2 802.8 C878.1 807.0 875.9 813.0 873.8 819 C871.7 825.0 870.5 832.8 868.8 839 C867.1 845.2 866.3 851.1 863.8 856.5 C861.3 861.9 858.0 866.5 853.8 871.5 C849.6 876.5 844.2 881.5 838.8 886.5 C833.4 891.5 826.2 897.2 821.2 901.5 C816.2 905.8 810.9 910.2 808.8 912" fill="none" stroke="#c9c9c9" stroke-width="5" stroke-linecap="butt"/>
<path d="M920 794 C920.6 799.0 923.0 815.2 923.8 824 C924.6 832.8 924.0 839.4 925 846.5 C926.0 853.6 928.5 860.2 930 866.5 C931.5 872.8 933.7 876.4 934.2 884 C934.7 891.6 933.2 907.3 933 912" fill="none" stroke="#f1f238" stroke-width="9" stroke-linecap="butt"/>
<path d="M920 794 C920.6 799.0 923.0 815.2 923.8 824 C924.6 832.8 924.0 839.4 925 846.5 C926.0 853.6 928.5 860.2 930 866.5 C931.5 872.8 933.7 876.4 934.2 884 C934.7 891.6 933.2 907.3 933 912" fill="none" stroke="#c9c9c9" stroke-width="7" stroke-linecap="butt"/>
<path d="M960 378 L967.5 403 L976.2 428 L981.2 445.5 L983.8 455.5 L985 465.5 L983.8 478 L978.8 492 L986 490.5 L996 476.8 L1004 465.5 L1006.2 458 L1012.5 455.5 L1025 452.4 L1041.2 450.5 L1060 451.8 L1072.5 455.5 L1066.2 451.8 L1052.5 444.2 L1047.5 443 L1035 445.5 L1015 449.2 L1001.2 452.4 L996.2 449.2 L990 441.8 L983.8 428 L975 403 L966.2 378Z" fill="#c9c9c9" stroke="#f1f238" stroke-width="1"/>
<path d="M983.8 700 L977.5 721.2 L972.5 731.2 L952.5 748.8 L950 755 L933.8 766.2 L921.2 766.2 L911.2 770 L907.5 777.5 L892.5 787.5 L880 796.2 L892.5 796.9 L905 796.9 L917.5 801.5 L919.4 814 L926.2 814 L928.8 797.5 L935 785 L945 772.5 L960 758.8 L970 747.5 L980 735 L986.2 722.5 L990 700Z" fill="#c9c9c9" stroke="#f1f238" stroke-width="1"/>
<path d="M980 725 L986.2 731.2 L997.5 740 L1017.5 747.5 L1042.5 752.5 L1052.5 750 L1065 737.5 L1067.5 738.8 L1063.8 747.5 L1052.5 755 L1042.5 755 L1017.5 750 L997.5 743.8 L988.8 737.5 L980 735Z" fill="#c9c9c9" stroke="#f1f238" stroke-width="1"/>
<path d="M1100 471.1 L1103.8 467.4 L1128.8 487.4 L1125 491.1Z" fill="#c9c9c9" stroke="#f1f238" stroke-width="1"/>
<path d="M983 490 C982.1 494.7 978.6 510.0 977.5 518 C976.4 526.0 976.3 530.1 976.5 538 C976.7 545.9 977.2 557.6 978.5 565.5 C979.8 573.4 982.6 578.1 984.5 585.5 C986.4 592.9 988.5 601.8 990 610 C991.5 618.2 992.8 626.7 993.5 635 C994.2 643.3 994.7 660.7 994.5 660 C994.3 659.3 992.4 631.7 992.5 631 C992.6 630.3 994.8 649.3 995 656 C995.2 662.7 994.8 664.8 993.8 671 C992.8 677.2 990.0 688.3 988.8 693.5 C987.6 698.7 986.9 700.6 986.5 702" fill="none" stroke="#c9c9c9" stroke-width="6.5"/>
<path d="M892.5 794 C890.6 795.5 884.3 798.6 881.2 802.8 C878.1 807.0 875.0 816.3 873.8 819" fill="none" stroke="#c9c9c9" stroke-width="4.5"/>
<path d="M920 794 C920.6 799.0 923.0 815.2 923.8 824 C924.6 832.8 924.8 842.8 925 846.5" fill="none" stroke="#c9c9c9" stroke-width="5.5"/>
<path d="M323 214.5 C326.7 212.7 337.6 207.9 345 203.8 C352.4 199.7 361.2 194.8 367.5 190 C373.8 185.2 378.3 180.6 382.5 175 C386.7 169.4 390.8 159.3 392.5 156.2" fill="none" stroke="#f1f238" stroke-width="1.1"/>
<path d="M323 237.5 C324.0 235.6 326.8 228.7 328.8 226.2 C330.8 223.7 330.2 225.2 335 222.5 C339.8 219.8 350.4 214.2 357.5 210 C364.6 205.8 371.2 202.5 377.5 197.5 C383.8 192.5 390.8 186.9 395 180 C399.2 173.1 401.2 160.2 402.5 156.2" fill="none" stroke="#f1f238" stroke-width="1.1"/>
<path d="M327.5 233.8 C330.4 235.9 337.9 241.8 345 246.2 C352.1 250.6 362.1 254.8 370 260 C377.9 265.2 386.9 272.5 392.5 277.5 C398.1 282.5 401.5 286.2 403.8 290 C406.1 293.8 406.8 296.2 406.2 300 C405.6 303.8 403.1 309.0 400 312.5 C396.9 316.0 392.5 319.4 387.5 321.2 C382.5 322.9 375.4 323.6 370 323 C364.6 322.4 360.8 319.2 355 317.5 C349.2 315.8 340.3 313.8 335 312.5 C329.7 311.2 325.0 310.4 323 310" fill="none" stroke="#f1f238" stroke-width="1.1"/>
<path d="M323 248.8 C326.7 250.7 337.2 256.1 345 260 C352.8 263.9 362.9 268.3 370 272.5 C377.1 276.7 383.1 281.2 387.5 285 C391.9 288.8 394.9 292.1 396.2 295 C397.4 297.9 396.4 300.2 395 302.5 C393.6 304.8 391.7 307.6 387.5 308.8 C383.3 310.1 375.8 310.8 370 310 C364.2 309.2 358.3 306.1 352.5 303.8 C346.7 301.5 339.9 297.7 335 296.2 C330.1 294.7 325.0 295.2 323 295" fill="none" stroke="#f1f238" stroke-width="1.1"/>
<path d="M411.2 156.2 C411.6 159.3 412.5 169.8 413.8 175 C415.1 180.2 416.5 184.2 418.8 187.5 C421.1 190.8 424.4 193.6 427.5 195 C430.6 196.4 434.2 196.8 437.5 196.2 C440.8 195.6 445.2 192.6 447.5 191.2 C449.8 189.8 450.6 188.1 451.2 187.5" fill="none" stroke="#f1f238" stroke-width="1.1"/>
<path d="M451.2 187.5 L460 193.8 L456.2 197.5 L436.2 203" fill="none" stroke="#f1f238" stroke-width="1.1"/>
<path d="M436.2 203 C434.8 202.5 431.4 200.9 427.5 200 C423.6 199.1 415.6 196.9 412.5 197.5 C409.4 198.1 409.2 200.5 408.8 203.8 C408.4 207.1 408.8 212.9 410 217.5 C411.2 222.1 413.3 227.6 416.2 231.2 C419.1 234.8 423.1 237.1 427.5 238.8 C431.9 240.5 437.9 239.5 442.5 241.2 C447.1 242.9 450.4 245.5 455 248.8 C459.6 252.1 465.4 257.9 470 261.2 C474.6 264.5 478.3 266.8 482.5 268.8 C486.7 270.8 490.4 269.5 495 273 C499.6 276.5 504.2 284.0 510 290 C515.8 296.0 524.2 305.7 530 308.8 C535.8 311.9 538.3 309.6 545 308.8 C551.7 308.0 562.3 305.4 570 303.8 C577.7 302.2 584.3 299.7 591.2 299.5 C598.1 299.3 607.9 302.0 611.2 302.5" fill="none" stroke="#f1f238" stroke-width="1.1"/>
<path d="M611.2 302.5 C613.9 300.6 621.9 293.9 627.5 291.2 C633.1 288.5 638.8 288.0 645 286.2 C651.2 284.4 658.8 281.5 665 280.5 C671.2 279.5 676.2 279.4 682.5 280 C688.8 280.6 696.2 282.3 702.5 283.8 C708.8 285.3 717.1 288.0 720 288.8" fill="none" stroke="#f1f238" stroke-width="1.1"/>
<path d="M425 156.2 C425.3 158.5 426.0 166.2 427 170 C428.0 173.8 429.4 176.9 431.2 178.8 C432.9 180.7 435.2 181.4 437.5 181.2 C439.8 181.0 442.9 179.6 445 177.5 C447.1 175.4 448.8 172.4 450 168.8 C451.2 165.2 452.1 158.3 452.5 156.2" fill="none" stroke="#f1f238" stroke-width="1.1"/>
<path d="M465 156.2 L466.2 166.2 L455 182.5 L451.2 187.5" fill="none" stroke="#f1f238" stroke-width="1.1"/>
<path d="M490 156.2 C489.4 159.3 487.9 169.4 486.2 175 C484.5 180.6 482.7 184.6 480 190 C477.3 195.4 472.7 202.1 470 207.5 C467.3 212.9 465.0 217.9 463.8 222.5 C462.6 227.1 462.4 230.8 463 235 C463.6 239.2 465.1 243.3 467.5 247.5 C469.9 251.7 473.8 256.2 477.5 260 C481.2 263.8 487.1 267.8 490 270 C492.9 272.2 494.2 272.5 495 273" fill="none" stroke="#f1f238" stroke-width="1.1"/>
<path d="M611.2 302.5 C608.5 304.2 600.6 309.2 595 312.5 C589.4 315.8 584.2 320.4 577.5 322.5 C570.8 324.6 564.6 324.4 555 325 C545.4 325.6 527.9 325.8 520 326.2 C512.1 326.6 510.4 326.0 507.5 327.5 C504.6 329.0 503.1 332.1 502.5 335 C501.9 337.9 502.6 340.8 503.8 345 C505.1 349.2 507.7 354.5 510 360 C512.3 365.5 515.8 373.8 517.5 378 C519.2 382.2 518.8 381.3 520 385.5 C521.2 389.7 524.4 396.8 525 403 C525.6 409.2 525.5 416.3 523.8 423 C522.1 429.7 519.0 436.3 515 443 C511.0 449.7 505.8 456.3 500 463 C494.2 469.7 486.7 476.3 480 483 C473.3 489.7 466.2 496.8 460 503 C453.8 509.2 447.5 516.5 442.5 520.5 C437.5 524.5 433.8 526.8 430 526.8 C426.2 526.8 424.6 525.3 420 520.5 C415.4 515.7 407.9 505.1 402.5 498 C397.1 490.9 392.9 485.1 387.5 478 C382.1 470.9 375.4 461.8 370 455.5 C364.6 449.2 359.2 445.5 355 440.5 C350.8 435.5 347.9 431.8 345 425.5 C342.1 419.2 339.8 410.9 337.5 403 C335.2 395.1 332.9 383.9 331.2 378 C329.5 372.1 328.9 371.3 327.5 367.5 C326.1 363.7 323.8 357.1 323 355" fill="none" stroke="#f1f238" stroke-width="1.1"/>
<path d="M720 301.2 C715.8 300.8 702.5 299.1 695 298.8 C687.5 298.5 682.1 298.3 675 299.5 C667.9 300.7 661.7 302.8 652.5 306.2 C643.3 309.6 629.6 315.8 620 320 C610.4 324.2 601.7 328.5 595 331.2 C588.3 333.9 586.2 335.1 580 336.2 C573.8 337.2 566.2 337.5 557.5 337.5 C548.8 337.5 533.8 335.8 527.5 336.2 C521.2 336.6 521.2 337.7 520 340 C518.8 342.3 519.2 345.4 520 350 C520.8 354.6 523.5 362.8 525 367.5 C526.5 372.2 527.1 373.8 528.8 378 C530.5 382.2 533.6 386.8 535 393 C536.4 399.2 536.8 408.0 537 415.5 C537.2 423.0 537.0 431.8 536.2 438 C535.5 444.2 534.8 447.6 532.5 453 C530.2 458.4 526.2 466.3 522.5 470.5 C518.8 474.7 515.4 473.4 510 478 C504.6 482.6 496.7 491.3 490 498 C483.3 504.7 476.7 512.2 470 518 C463.3 523.8 456.2 529.0 450 533 C443.8 537.0 437.5 540.5 432.5 541.8 C427.5 543.0 423.8 542.8 420 540.5 C416.2 538.2 414.6 533.8 410 528 C405.4 522.2 397.9 513.0 392.5 505.5 C387.1 498.0 382.9 490.1 377.5 483 C372.1 475.9 365.8 469.2 360 463 C354.2 456.8 347.5 451.3 342.5 445.5 C337.5 439.7 333.2 433.0 330 428 C326.8 423.0 324.2 417.6 323 415.5" fill="none" stroke="#f1f238" stroke-width="1.1"/>
<path d="M536.2 440.5 C537.7 437.6 541.5 429.7 545 423 C548.5 416.3 553.8 406.3 557.5 400.5 C561.2 394.7 564.6 391.8 567.5 388 C570.4 384.2 572.1 383.1 575 378 C577.9 372.9 581.7 362.6 585 357.5 C588.3 352.4 591.2 350.2 595 347.5 C598.8 344.8 603.3 342.6 607.5 341.2 C611.7 339.8 614.6 339.0 620 338.8 C625.4 338.6 634.2 339.0 640 340 C645.8 341.0 650.2 343.1 655 345 C659.8 346.9 665.5 350.4 668.8 351.2 C672.1 352.0 670.6 351.0 675 350 C679.4 349.0 687.5 346.0 695 345 C702.5 344.0 715.8 344.0 720 343.8" fill="none" stroke="#f1f238" stroke-width="1.1"/>
<path d="M580 378 C582.1 375.0 588.8 364.5 592.5 360 C596.2 355.5 598.8 353.5 602.5 351.2 C606.2 348.9 609.6 347.2 615 346.2 C620.4 345.2 628.8 344.4 635 345 C641.2 345.6 647.3 347.9 652.5 350 C657.7 352.1 663.9 356.2 666.2 357.5" fill="none" stroke="#f1f238" stroke-width="1.1"/>
<path d="M680 378 C680.4 375.8 680.4 368.1 682.5 365 C684.6 361.9 688.8 360.3 692.5 359.5 C696.2 358.7 700.4 359.5 705 360 C709.6 360.5 717.5 362.1 720 362.5" fill="none" stroke="#f1f238" stroke-width="1.1"/>
<path d="M323 426.8 C325.0 429.5 331.3 437.8 335 443 C338.7 448.2 344.2 452.2 345 458 C345.8 463.8 342.9 473.8 340 478 C337.1 482.2 330.3 481.3 327.5 483 C324.7 484.7 323.8 487.2 323 488" fill="none" stroke="#f1f238" stroke-width="1.1"/>
<path d="M323 495.5 L357.5 465.5" fill="none" stroke="#f1f238" stroke-width="1.1"/>
<path d="M323 500.5 L358.8 468" fill="none" stroke="#f1f238" stroke-width="1.1"/>
<path d="M335 515.5 C334.6 512.6 331.2 502.2 332.5 498 C333.8 493.8 339.2 490.9 342.5 490.5 C345.8 490.1 350.0 496.3 352.5 495.5 C355.0 494.7 355.4 486.8 357.5 485.5 C359.6 484.2 362.9 485.1 365 488 C367.1 490.9 366.7 497.2 370 503 C373.3 508.8 379.6 516.8 385 523 C390.4 529.2 397.5 535.9 402.5 540.5 C407.5 545.1 412.9 548.8 415 550.5" fill="none" stroke="#f1f238" stroke-width="1.1"/>
<path d="M416.2 551.2 C421.0 548.2 436.0 539.4 445 533.5 C454.0 527.6 461.7 522.7 470 516 C478.3 509.3 486.7 500.8 495 493.5 C503.3 486.2 515.8 475.8 520 472.2" fill="none" stroke="#f1f238" stroke-width="1.1"/>
<path d="M418.8 552.8 C423.4 550.0 437.4 541.6 446.2 535.8 C455.0 530.0 463.1 524.9 471.5 518.2 C479.9 511.5 488.2 503.2 496.5 495.8 C504.8 488.4 517.3 477.6 521.5 474" fill="none" stroke="#f1f238" stroke-width="1.1"/>
<path d="M656.2 438 C656.4 430.5 657.0 403.8 657.5 393 C658.0 382.2 658.1 379.2 659 373 C659.9 366.8 661.5 360.1 663 355.5 C664.5 350.9 667.2 347.2 668 345.5" fill="none" stroke="#f1f238" stroke-width="1.1"/>
<path d="M681.2 378 L681.2 475.5" fill="none" stroke="#f1f238" stroke-width="1.1"/>
<path d="M590 480.5 C590.8 479.2 592.1 476.3 595 473 C597.9 469.7 601.2 464.5 607.5 460.5 C613.8 456.5 625.1 452.2 632.5 449.2 C639.9 446.2 648.8 443.6 652 442.5" fill="none" stroke="#f1f238" stroke-width="1.1"/>
<path d="M588.8 485.5 C588.6 488.4 586.9 496.8 587.5 503 C588.1 509.2 590.0 517.2 592.5 523 C595.0 528.8 599.7 534.2 602.5 538 C605.3 541.8 608.3 544.2 609.5 545.5" fill="none" stroke="#f1f238" stroke-width="1.1"/>
<path d="M609.5 545.5 C612.5 545.5 621.6 544.2 627.5 545.5 C633.4 546.8 640.4 550.7 645 553 C649.6 555.3 652.5 558.8 655 559.2 C657.5 559.6 659.4 558.6 660 555.5 C660.6 552.4 657.5 545.5 658.8 540.5 C660.0 535.5 663.5 529.9 667.5 525.5 C671.5 521.1 676.7 517.3 682.5 514.2 C688.3 511.1 696.2 508.0 702.5 506.8 C708.8 505.6 717.1 506.8 720 506.8" fill="none" stroke="#f1f238" stroke-width="1.1"/>
<path d="M323 585 L357.5 585" fill="none" stroke="#f1f238" stroke-width="1.6"/>
<path d="M323 535.5 C325.0 536.8 331.3 539.7 335 543 C338.7 546.3 342.1 550.5 345 555.5 C347.9 560.5 350.0 567.6 352.5 573 C355.0 578.4 357.1 583.4 360 588 C362.9 592.6 367.7 597.5 370 600.5 C372.3 603.5 370.5 602.6 373.8 606 C377.1 609.4 384.4 615.6 390 621 C395.6 626.4 401.2 631.4 407.5 638.5 C413.8 645.6 422.1 656.8 427.5 663.5 C432.9 670.2 434.6 673.5 440 678.5 C445.4 683.5 455.0 688.9 460 693.5 C465.0 698.1 467.5 701.0 470 706 C472.5 711.0 472.5 716.8 475 723.5 C477.5 730.2 480.8 738.5 485 746 C489.2 753.5 495.8 762.2 500 768.5 C504.2 774.8 507.1 779.5 510 783.5 C512.9 787.5 516.2 788.0 517.5 792.2 C518.8 796.5 517.1 803.7 517.5 809 C517.9 814.3 519.8 819.0 520 824 C520.2 829.0 519.2 834.8 518.8 839 C518.4 843.2 516.9 845.7 517.5 849 C518.1 852.3 521.0 854.8 522.5 859 C524.0 863.2 526.6 869.4 526.2 874 C525.8 878.6 521.9 882.8 520 886.5 C518.1 890.2 515.4 893.2 515 896.5 C514.6 899.8 516.2 903.9 517.5 906.5 C518.8 909.1 521.7 911.1 522.5 912" fill="none" stroke="#f1f238" stroke-width="2.2"/>
<path d="M739.5 156 L739.5 298" fill="none" stroke="#f1f238" stroke-width="1.7"/>
<path d="M739.5 383 L739.5 435" fill="none" stroke="#f1f238" stroke-width="1.7"/>
<path d="M739.5 500 L739.5 912" fill="none" stroke="#f1f238" stroke-width="1.7"/>
<path d="M1132.5 156 L1132.5 336" fill="none" stroke="#f1f238" stroke-width="1.2"/>
<path d="M1133 424 L1133 795" fill="none" stroke="#f1f238" stroke-width="2"/>
<path d="M988 585.6 L1060 585.6" fill="none" stroke="#f1f238" stroke-width="1.2"/>
<path d="M1060 585.6 L1135 585.6" fill="none" stroke="#f1f238" stroke-width="2"/>
<path d="M862.5 160 C864.2 163.8 867.1 170.8 872.5 182.5 C877.9 194.2 887.5 212.1 895 230 C902.5 247.9 912.1 274.6 917.5 290 C922.9 305.4 924.2 316.0 927.5 322.5 C930.8 329.0 935.8 327.8 937.5 328.8" fill="none" stroke="#f1f238" stroke-width="1.1"/>
<path d="M896.2 156.2 C898.5 163.5 904.8 184.4 910 200 C915.2 215.6 922.5 235.0 927.5 250 C932.5 265.0 936.9 277.9 940 290 C943.1 302.1 945.2 317.1 946.2 322.5" fill="none" stroke="#f1f238" stroke-width="1.1"/>
<path d="M906.2 156.2 C907.0 159.3 907.7 162.7 911.2 175 C914.8 187.3 922.3 212.5 927.5 230 C932.7 247.5 939.2 266.2 942.5 280 C945.8 293.8 946.7 307.1 947.5 312.5" fill="none" stroke="#f1f238" stroke-width="1.1"/>
<path d="M942.5 330 C942.5 323.3 941.7 299.2 942.5 290 C943.3 280.8 944.6 279.2 947.5 275 C950.4 270.8 955.4 267.1 960 265 C964.6 262.9 970.0 262.1 975 262.5 C980.0 262.9 984.6 264.6 990 267.5 C995.4 270.4 1001.2 272.9 1007.5 280 C1013.8 287.1 1021.7 300.8 1027.5 310 C1033.3 319.2 1037.9 326.2 1042.5 335 C1047.1 343.8 1052.1 355.3 1055 362.5 C1057.9 369.7 1059.2 375.4 1060 378" fill="none" stroke="#f1f238" stroke-width="1.1"/>
<path d="M946.2 357.5 C947.5 354.6 952.3 347.9 953.8 340 C955.3 332.1 954.2 318.3 955 310 C955.8 301.7 956.7 294.8 958.8 290 C960.9 285.2 964.0 282.4 967.5 281.2 C971.0 279.9 976.2 280.6 980 282.5 C983.8 284.4 985.4 286.7 990 292.5 C994.6 298.3 1001.7 308.3 1007.5 317.5 C1013.3 326.7 1020.4 337.4 1025 347.5 C1029.6 357.6 1033.3 372.9 1035 378" fill="none" stroke="#f1f238" stroke-width="1.1"/>
<path d="M1037.5 336.2 L1055 317.5 L1065 325 L1080 330 L1093.8 333.8 L1101.2 343.8" fill="none" stroke="#f1f238" stroke-width="1.1"/>
<path d="M1101.2 343.8 C1102.7 342.8 1106.9 339.0 1110 337.5 C1113.1 336.0 1118.3 335.4 1120 335" fill="none" stroke="#f1f238" stroke-width="1.1"/>
<path d="M1101.2 343.8 C1100.8 346.1 1098.6 351.8 1098.8 357.5 C1099.0 363.2 1101.9 374.6 1102.5 378" fill="none" stroke="#f1f238" stroke-width="1.1"/>
<path d="M720 288.8 C723.2 290.2 733.2 294.4 739.5 297.5 C745.8 300.6 752.4 303.8 757.5 307.5 C762.6 311.2 767.1 315.4 770 320 C772.9 324.6 774.8 330.0 775 335 C775.2 340.0 772.5 345.8 771.2 350 C769.9 354.2 772.4 354.6 767 360 C761.6 365.4 747.9 375.4 738.8 382.5 C729.7 389.6 718.0 397.2 712.5 402.5 C707.0 407.8 706.9 411.8 706 414 C705.1 416.2 706.6 413.8 706.9 415.5 C707.1 417.2 706.1 421.3 707.5 424.2 C708.9 427.1 711.9 431.0 715 433 C718.1 435.0 722.5 435.7 726.2 436.1 C730.0 436.5 735.6 435.6 737.5 435.5" fill="none" stroke="#f1f238" stroke-width="1.1"/>
<path d="M645 288 C648.3 287.1 658.8 283.5 665 282.5 C671.2 281.5 676.2 281.4 682.5 282 C688.8 282.6 696.2 284.3 702.5 285.8 C708.8 287.3 712.9 287.9 720 290.8 C727.1 293.7 737.9 299.2 745 303 C752.1 306.8 758.3 309.3 762.5 313.8 C766.7 318.3 769.4 324.0 770 330 C770.6 336.0 769.5 344.8 766.2 350 C762.9 355.2 755.9 358.7 750 361.2 C744.1 363.7 736.0 364.8 731 365 C726.0 365.2 721.8 362.9 720 362.5" fill="none" stroke="#f1f238" stroke-width="1.1"/>
<path d="M720 301.2 C723.8 303.1 737.1 308.5 742.5 312.5 C747.9 316.5 750.4 321.2 752.5 325 C754.6 328.8 755.4 331.5 755 335 C754.6 338.5 753.3 343.7 750 346.2 C746.7 348.7 740.0 350.4 735 350 C730.0 349.6 722.5 344.8 720 343.8" fill="none" stroke="#f1f238" stroke-width="1.1"/>
<path d="M890 378 C890.8 376.9 891.7 372.9 895 371.2 C898.3 369.4 906.2 369.8 910 367.5 C913.8 365.2 915.4 362.1 917.5 357.5 C919.6 352.9 919.2 344.2 922.5 340 C925.8 335.8 934.2 334.2 937.5 332.5 C940.8 330.8 941.7 330.4 942.5 330" fill="none" stroke="#f1f238" stroke-width="1.1"/>
<path d="M921.2 342.5 C922.7 341.7 926.0 339.6 930 337.5 C934.0 335.4 942.5 331.2 945 330" fill="none" stroke="#f1f238" stroke-width="1.1"/>
<path d="M1181.2 156.2 C1184.8 158.9 1193.1 165.6 1202.5 172.5 C1211.9 179.4 1224.6 189.2 1237.5 197.5 C1250.4 205.8 1267.1 215.8 1280 222.5 C1292.9 229.2 1307.5 233.1 1315 237.5 C1322.5 241.9 1323.3 246.9 1325 248.8" fill="none" stroke="#f1f238" stroke-width="1.1"/>
<path d="M1205 156.2 C1207.5 159.1 1214.6 168.6 1220 173.8 C1225.4 179.0 1230.0 182.7 1237.5 187.5 C1245.0 192.3 1256.2 197.5 1265 202.5 C1273.8 207.5 1282.9 215.2 1290 217.5 C1297.1 219.8 1302.5 217.9 1307.5 216.2 C1312.5 214.5 1315.8 210.0 1320 207.5 C1324.2 205.0 1328.3 201.8 1332.5 201.2 C1336.7 200.6 1341.9 201.5 1345 203.8 C1348.1 206.1 1350.6 210.6 1351.2 215 C1351.8 219.4 1350.2 225.4 1348.8 230 C1347.3 234.6 1344.8 239.0 1342.5 242.5 C1340.2 246.0 1336.2 249.8 1335 251.2" fill="none" stroke="#f1f238" stroke-width="1.1"/>
<path d="M1217.5 156.2 C1220.0 158.7 1225.4 166.0 1232.5 171.2 C1239.6 176.4 1252.1 182.3 1260 187.5 C1267.9 192.7 1274.2 198.9 1280 202.5 C1285.8 206.1 1289.2 208.8 1295 208.8 C1300.8 208.8 1310.8 204.6 1315 202.5 C1319.2 200.4 1317.1 198.3 1320 196.2 C1322.9 194.1 1328.3 190.6 1332.5 190 C1336.7 189.4 1340.8 190.4 1345 192.5 C1349.2 194.6 1354.4 198.3 1357.5 202.5 C1360.6 206.7 1362.8 213.3 1363.8 217.5 C1364.8 221.7 1365.1 223.3 1363.8 227.5 C1362.5 231.7 1358.7 238.3 1356.2 242.5 C1353.7 246.7 1350.5 249.6 1348.8 252.5 C1347.1 255.4 1346.6 258.8 1346.2 260" fill="none" stroke="#f1f238" stroke-width="1.1"/>
<path d="M1342.5 156.2 L1323.8 193.8" fill="none" stroke="#f1f238" stroke-width="1.1"/>
<path d="M1120 335 C1124.2 335.4 1136.7 337.9 1145 337.5 C1153.3 337.1 1162.5 334.6 1170 332.5 C1177.5 330.4 1184.6 328.8 1190 325 C1195.4 321.2 1198.8 315.8 1202.5 310 C1206.2 304.2 1208.8 296.7 1212.5 290 C1216.2 283.3 1219.6 276.0 1225 270 C1230.4 264.0 1239.2 257.3 1245 253.8 C1250.8 250.3 1251.7 249.6 1260 248.8 C1268.3 248.0 1284.2 248.6 1295 248.8 C1305.8 249.0 1317.5 249.4 1325 250 C1332.5 250.6 1336.5 250.8 1340 252.5 C1343.5 254.2 1342.9 255.4 1346.2 260 C1349.5 264.6 1353.5 273.3 1360 280 C1366.5 286.7 1377.1 294.2 1385 300 C1392.9 305.8 1401.2 310.8 1407.5 315 C1413.8 319.2 1418.8 321.2 1422.5 325 C1426.2 328.8 1427.9 334.4 1430 337.5 C1432.1 340.6 1432.5 343.0 1435 343.8 C1437.5 344.6 1441.7 344.8 1445 342.5 C1448.3 340.2 1454.2 333.8 1455 330 C1455.8 326.2 1450.0 322.5 1450 320 C1450.0 317.5 1452.9 316.7 1455 315 C1457.1 313.3 1460.0 312.9 1462.5 310 C1465.0 307.1 1467.5 302.5 1470 297.5 C1472.5 292.5 1475.0 285.8 1477.5 280 C1480.0 274.2 1483.8 265.4 1485 262.5" fill="none" stroke="#f1f238" stroke-width="1.1"/>
<path d="M1152.5 343.8 C1155.4 343.6 1164.2 344.8 1170 342.5 C1175.8 340.2 1182.1 333.3 1187.5 330 C1192.9 326.7 1198.8 327.1 1202.5 322.5 C1206.2 317.9 1206.7 309.6 1210 302.5 C1213.3 295.4 1217.5 286.2 1222.5 280 C1227.5 273.8 1233.8 268.5 1240 265 C1246.2 261.5 1255.0 260.1 1260 258.8 C1265.0 257.5 1264.2 257.0 1270 257 C1275.8 257.0 1284.6 257.7 1295 258.8 C1305.4 259.9 1324.2 260.3 1332.5 263.8 C1340.8 267.3 1338.8 273.6 1345 280 C1351.2 286.4 1361.7 295.8 1370 302.5 C1378.3 309.2 1386.7 314.6 1395 320 C1403.3 325.4 1414.8 330.4 1420 335 C1425.2 339.6 1423.7 344.6 1426.2 347.5 C1428.7 350.4 1431.5 351.7 1435 352.5 C1438.5 353.3 1442.9 354.2 1447.5 352.5 C1452.1 350.8 1458.3 347.5 1462.5 342.5 C1466.7 337.5 1470.4 327.9 1472.5 322.5 C1474.6 317.1 1472.5 315.0 1475 310 C1477.5 305.0 1485.0 297.1 1487.5 292.5 C1490.0 287.9 1489.6 284.2 1490 282.5" fill="none" stroke="#f1f238" stroke-width="1.1"/>
<path d="M1332.5 263.8 L1340 260 L1346.2 260" fill="none" stroke="#f1f238" stroke-width="1.1"/>
<path d="M1173.8 392.5 C1173.8 390.1 1173.8 385.1 1173.8 378 C1173.8 370.9 1172.3 356.3 1173.8 350 C1175.2 343.7 1178.1 342.9 1182.5 340 C1186.9 337.1 1195.8 336.2 1200 332.5 C1204.2 328.8 1206.2 320.0 1207.5 317.5" fill="none" stroke="#f1f238" stroke-width="1.1"/>
<path d="M1236.2 392.5 C1235.6 390.1 1234.0 384.2 1232.5 378 C1231.0 371.8 1228.5 362.6 1227.5 355 C1226.5 347.4 1225.4 339.2 1226.2 332.5 C1227.0 325.8 1229.4 320.4 1232.5 315 C1235.6 309.6 1240.4 305.0 1245 300 C1249.6 295.0 1255.0 289.0 1260 285 C1265.0 281.0 1269.2 277.9 1275 276.2 C1280.8 274.5 1287.5 273.9 1295 275 C1302.5 276.1 1312.1 280.2 1320 282.5 C1327.9 284.8 1337.1 285.9 1342.5 288.8 C1347.9 291.7 1346.2 294.4 1352.5 300 C1358.8 305.6 1371.2 316.7 1380 322.5 C1388.8 328.3 1398.8 331.2 1405 335 C1411.2 338.8 1414.2 341.2 1417.5 345 C1420.8 348.8 1420.4 354.2 1425 357.5 C1429.6 360.8 1437.5 363.7 1445 364.5 C1452.5 365.3 1462.5 363.4 1470 362.5 C1477.5 361.6 1486.7 359.4 1490 358.8" fill="none" stroke="#f1f238" stroke-width="1.1"/>
<path d="M1120 345 C1122.5 345.4 1131.2 345.4 1135 347.5 C1138.8 349.6 1140.4 354.2 1142.5 357.5 C1144.6 360.8 1146.7 364.1 1147.5 367.5 C1148.3 370.9 1147.7 373.8 1147.5 378 C1147.3 382.2 1146.4 390.1 1146.2 392.5" fill="none" stroke="#f1f238" stroke-width="1.1"/>
<path d="M1526.6 287.8 C1526.6 289.7 1526.0 295.7 1526.6 299.3 C1527.2 302.9 1527.8 306.3 1530 309.2 C1532.2 312.1 1535.4 315.4 1539.8 316.6 C1544.2 317.8 1550.5 317.8 1556.3 316.6 C1562.0 315.4 1567.7 311.1 1574.3 309.2 C1580.9 307.3 1592.1 305.7 1595.7 305" fill="none" stroke="#f1f238" stroke-width="1.1"/>
<path d="M1534.9 287.8 C1535.0 289.4 1534.9 294.7 1535.7 297.7 C1536.5 300.7 1537.8 303.8 1539.8 305.9 C1541.8 307.9 1545.0 309.7 1548 310 C1551.0 310.3 1553.5 309.1 1557.9 307.6 C1562.3 306.1 1568.0 302.5 1574.3 301 C1580.6 299.5 1592.1 298.9 1595.7 298.5" fill="none" stroke="#f1f238" stroke-width="1.5"/>
<path d="M1490.5 358.6 C1494.6 357.2 1505.4 353.3 1515 350.3 C1524.6 347.3 1534.5 344.5 1548 340.5 C1561.5 336.5 1587.8 328.8 1595.7 326.5" fill="none" stroke="#f1f238" stroke-width="1.1"/>
<path d="M1498.7 390 C1501.4 388.3 1506.8 384.4 1515 380 C1523.2 375.6 1534.5 370.2 1548 363.5 C1561.5 356.8 1587.8 343.6 1595.7 339.6" fill="none" stroke="#f1f238" stroke-width="1.1"/>
<path d="M1511.8 390 C1515.1 388.3 1522.8 384.4 1531.6 380 C1540.4 375.6 1553.8 369.0 1564.5 363.5 C1575.2 358.0 1590.5 349.8 1595.7 347" fill="none" stroke="#f1f238" stroke-width="1.1"/>
<path d="M1520 390 C1523.3 388.3 1532.4 383.6 1539.8 380 C1547.2 376.4 1555.2 373.3 1564.5 368.4 C1573.8 363.4 1590.5 353.3 1595.7 350.3" fill="none" stroke="#f1f238" stroke-width="1.6"/>
<path d="M681.9 465.5 C681.9 466.9 681.2 472.1 682.1 474.2 C683.0 476.3 685.4 477.4 687.5 478 C689.6 478.6 692.9 478.6 695 478 C697.1 477.4 697.9 476.7 700 474.2 C702.1 471.7 705.0 466.5 707.5 463 C710.0 459.5 712.9 455.7 715 453 C717.1 450.3 717.7 449.1 720 446.8 C722.3 444.5 725.5 441.5 728.8 439.2 C732.1 436.9 735.2 435.2 740 433 C744.8 430.8 751.5 427.9 757.5 426 C763.5 424.1 769.5 423.3 776.2 421.8 C782.9 420.3 791.2 418.9 797.5 416.8 C803.8 414.7 808.0 411.6 813.8 409.2 C819.6 406.8 826.3 404.6 832.5 402.2 C838.7 399.8 845.0 396.5 851.2 394.8 C857.5 393.1 864.8 393.4 870 391.8 C875.2 390.2 879.6 387.8 882.5 385.5 C885.4 383.2 886.7 379.2 887.5 378" fill="none" stroke="#f1f238" stroke-width="1.1"/>
<path d="M670 378 C670.0 393.6 670.5 455.1 670 471.8 C669.5 488.5 667.1 475.7 666.9 478 C666.7 480.3 667.4 482.9 668.8 485.5 C670.1 488.1 672.3 491.8 675 493.8 C677.7 495.8 681.2 497.7 685 497.5 C688.8 497.3 694.2 494.1 697.5 492.5 C700.8 490.9 702.6 489.8 705 488 C707.4 486.2 710.5 483.9 711.9 481.8 C713.2 479.7 713.0 477.2 713.1 475.5 C713.2 473.8 711.4 473.5 712.5 471.8 C713.6 470.1 717.5 467.8 720 465.5 C722.5 463.2 724.4 460.4 727.5 458 C730.6 455.6 733.8 453.5 738.8 451 C743.8 448.5 751.3 445.0 757.5 443 C763.7 441.0 767.9 440.4 776.2 439.2 C784.5 437.9 798.1 437.4 807.5 435.5 C816.9 433.6 825.2 430.5 832.5 428 C839.8 425.5 846.0 422.6 851.2 420.5 C856.4 418.4 858.6 418.0 863.8 415.5 C869.0 413.0 876.3 408.6 882.5 405.5 C888.7 402.4 895.0 399.4 901.2 396.8 C907.5 394.2 914.0 392.9 920 389.8 C926.0 386.7 934.6 380.0 937.5 378" fill="none" stroke="#f1f238" stroke-width="1.1"/>
<path d="M735 436.8 C737.7 435.8 745.4 432.3 751.2 430.5 C757.0 428.7 761.7 428.1 770 426 C778.3 423.9 792.9 420.4 801.2 418 C809.5 415.6 813.7 414.0 820 411.8 C826.3 409.6 832.5 407.3 838.8 404.8 C845.0 402.3 850.6 399.2 857.5 396.8 C864.4 394.4 875.2 392.8 880 390.5 C884.8 388.2 883.3 385.1 886.2 383 C889.1 380.9 895.6 378.8 897.5 378" fill="none" stroke="#f1f238" stroke-width="1.1"/>
<path d="M720 505.5 C722.9 504.7 731.2 502.8 737.5 500.5 C743.8 498.2 752.1 494.5 757.5 492 C762.9 489.5 765.4 487.3 770 485.5 C774.6 483.7 778.5 481.8 785 481 C791.5 480.2 803.0 482.1 808.8 481 C814.6 479.9 816.0 477.2 820 474.2 C824.0 471.2 828.3 465.7 832.5 463 C836.7 460.3 838.8 460.3 845 458 C851.2 455.7 861.7 452.1 870 449.2 C878.3 446.3 886.7 443.0 895 440.5 C903.3 438.0 911.7 435.9 920 434.2 C928.3 432.5 937.7 432.6 945 430.5 C952.3 428.4 960.7 423.2 963.8 421.8" fill="none" stroke="#f1f238" stroke-width="1.1"/>
<path d="M1040 378 C1040.8 380.1 1043.3 386.3 1045 390.5 C1046.7 394.7 1047.5 398.8 1050 403 C1052.5 407.2 1056.7 411.5 1060 415.5 C1063.3 419.5 1065.8 423.9 1070 426.8 C1074.2 429.7 1080.4 431.3 1085 433 C1089.6 434.7 1092.3 436.8 1097.5 436.8 C1102.7 436.8 1110.0 434.5 1116.2 433 C1122.5 431.5 1131.9 428.8 1135 428" fill="none" stroke="#f1f238" stroke-width="1.1"/>
<path d="M1056.2 378 C1057.2 380.1 1059.8 385.9 1062.5 390.5 C1065.2 395.1 1068.8 401.3 1072.5 405.5 C1076.2 409.7 1080.8 412.8 1085 415.5 C1089.2 418.2 1093.3 421.2 1097.5 421.8 C1101.7 422.4 1106.2 421.3 1110 419.2 C1113.8 417.1 1118.1 414.0 1120 409.2 C1121.9 404.4 1121.4 395.7 1121.2 390.5 C1121.0 385.3 1119.2 380.1 1118.8 378" fill="none" stroke="#f1f238" stroke-width="1.1"/>
<path d="M1102.5 378 C1103.3 379.7 1106.2 384.7 1107.5 388 C1108.8 391.3 1110.6 394.5 1110 398 C1109.4 401.5 1107.1 405.9 1103.8 409.2 C1100.5 412.5 1092.3 416.5 1090 418" fill="none" stroke="#f1f238" stroke-width="1.1"/>
<path d="M1068.8 440.5 C1069.8 440.3 1071.3 438.8 1075 439.2 C1078.7 439.6 1085.4 440.7 1091.2 443 C1097.0 445.3 1104.8 450.1 1110 453 C1115.2 455.9 1118.8 458.4 1122.5 460.5 C1126.2 462.6 1130.8 464.7 1132.5 465.5" fill="none" stroke="#f1f238" stroke-width="1.1"/>
<path d="M1068.8 440.5 C1070.0 441.8 1073.5 445.1 1076.2 448 C1078.9 450.9 1080.8 454.7 1085 458 C1089.2 461.3 1098.5 466.3 1101.2 468" fill="none" stroke="#f1f238" stroke-width="1.1"/>
<path d="M1086.2 429.2 C1088.1 428.6 1092.5 426.3 1097.5 425.5 C1102.5 424.7 1110.0 424.4 1116.2 424.2 C1122.5 424.0 1131.9 424.2 1135 424.2" fill="none" stroke="#f1f238" stroke-width="1.1"/>
<path d="M976.2 378 C977.7 382.2 982.3 394.7 985 403 C987.7 411.3 990.8 422.4 992.5 428 C994.2 433.6 994.2 434.9 995 436.8 C995.8 438.7 997.1 438.8 997.5 439.2" fill="none" stroke="#f1f238" stroke-width="1.1"/>
<path d="M971.2 378 C972.7 382.2 977.1 394.7 980 403 C982.9 411.3 986.9 422.2 988.8 428 C990.7 433.8 990.8 436.3 991.2 438" fill="none" stroke="#f1f238" stroke-width="1.1"/>
<path d="M520 824 C520.8 824.4 523.8 823.6 525 826.5 C526.2 829.4 526.2 837.5 527.5 841.5 C528.8 845.5 530.0 848.1 532.5 850.2 C535.0 852.3 539.6 851.9 542.5 854 C545.4 856.1 547.1 860.3 550 862.8 C552.9 865.3 554.6 867.5 560 869 C565.4 870.5 572.5 869.8 582.5 871.5 C592.5 873.2 611.7 878.0 620 879 C628.3 880.0 626.2 879.9 632.5 877.8 C638.8 875.7 649.6 870.5 657.5 866.5 C665.4 862.5 673.8 859.8 680 854 C686.2 848.2 691.2 839.8 695 831.5 C698.8 823.2 700.0 813.6 702.5 804 C705.0 794.4 707.1 781.1 710 774 C712.9 766.9 718.3 764.3 720 761.5 C721.7 758.7 718.3 758.5 720 757.2 C721.7 755.9 726.7 754.5 730 753.5 C733.3 752.5 736.7 751.3 740 751.5 C743.3 751.7 747.5 752.4 750 754.8 C752.5 757.2 752.9 762.5 755 766 C757.1 769.5 759.2 773.1 762.5 776 C765.8 778.9 769.6 781.8 775 783.5 C780.4 785.2 787.5 786.2 795 786.5 C802.5 786.8 812.5 786.4 820 785.5 C827.5 784.6 834.2 783.0 840 781 C845.8 779.0 850.8 776.4 855 773.5 C859.2 770.6 862.5 767.2 865 763.5 C867.5 759.8 868.1 754.8 870 751 C871.9 747.2 873.7 743.1 876.2 741 C878.7 738.9 881.0 738.3 885 738.5 C889.0 738.7 895.8 740.5 900 742.2 C904.2 743.9 905.4 748.3 910 748.5 C914.6 748.7 922.1 746.0 927.5 743.5 C932.9 741.0 938.3 737.7 942.5 733.5 C946.7 729.3 950.0 723.9 952.5 718.5 C955.0 713.1 955.0 706.4 957.5 701 C960.0 695.6 964.2 690.6 967.5 686 C970.8 681.4 975.4 678.5 977.5 673.5 C979.6 668.5 979.2 663.1 980 656 C980.8 648.9 982.3 639.3 982.5 631 C982.7 622.7 981.4 610.2 981.2 606" fill="none" stroke="#f1f238" stroke-width="1.2"/>
<path d="M1132.5 794 C1127.1 793.4 1110.0 791.7 1100 790.2 C1090.0 788.7 1079.2 786.9 1072.5 785.2 C1065.8 783.5 1064.6 780.8 1060 780.2 C1055.4 779.6 1049.6 780.9 1045 781.5 C1040.4 782.1 1035.8 784.4 1032.5 784 C1029.2 783.6 1027.1 779.4 1025 779 C1022.9 778.6 1021.9 781.9 1020 781.5 C1018.1 781.1 1015.5 779.0 1013.8 776.5 C1012.1 774.0 1012.3 768.6 1010 766.5 C1007.7 764.4 1004.2 762.8 1000 764 C995.8 765.2 989.2 771.5 985 774 C980.8 776.5 977.9 776.5 975 779 C972.1 781.5 970.0 785.9 967.5 789 C965.0 792.1 962.1 794.5 960 797.8 C957.9 801.1 955.8 803.0 955 809 C954.2 815.0 955.2 825.7 955 834 C954.8 842.3 953.8 850.7 953.8 859 C953.8 867.3 954.6 875.2 955 884 C955.4 892.8 956.0 907.3 956.2 912" fill="none" stroke="#f1f238" stroke-width="1.2"/>
<path d="M970 912 C970.4 907.3 970.8 894.9 972.5 884 C974.2 873.1 976.2 857.3 980 846.5 C983.8 835.7 989.2 827.3 995 819 C1000.8 810.7 1008.8 801.5 1015 796.5 C1021.2 791.5 1023.3 790.5 1032.5 789 C1041.7 787.5 1059.6 786.5 1070 787.8 C1080.4 789.0 1086.7 793.8 1095 796.5 C1103.3 799.2 1113.8 802.1 1120 804 C1126.2 805.9 1130.4 807.2 1132.5 807.8" fill="none" stroke="#f1f238" stroke-width="1.1"/>
<path d="M997.5 666 C998.3 666.6 1000.2 667.7 1002.5 669.8 C1004.8 671.9 1009.5 675.0 1011.2 678.5 C1012.9 682.0 1010.2 688.1 1012.5 691 C1014.8 693.9 1021.7 693.5 1025 696 C1028.3 698.5 1029.6 703.1 1032.5 706 C1035.4 708.9 1040.4 710.6 1042.5 713.5 C1044.6 716.4 1042.9 720.8 1045 723.5 C1047.1 726.2 1051.0 728.5 1055 729.8 C1059.0 731.0 1066.5 729.1 1068.8 731 C1071.1 732.9 1070.3 737.2 1068.8 741 C1067.3 744.8 1062.3 750.0 1060 753.5 C1057.7 757.0 1055.0 760.0 1055 762.2 C1055.0 764.4 1059.0 763.5 1060 766.5 C1061.0 769.5 1059.1 777.1 1061.2 780.2 C1063.3 783.3 1066.0 783.5 1072.5 785.2 C1079.0 786.9 1094.2 790.0 1100 790.2 C1105.8 790.4 1105.0 789.4 1107.5 786.5 C1110.0 783.6 1112.1 775.7 1115 772.8 C1117.9 769.9 1122.1 769.2 1125 769 C1127.9 768.8 1131.2 771.1 1132.5 771.5" fill="none" stroke="#f1f238" stroke-width="1"/>
<path d="M881.2 756 C882.2 755.4 885.2 752.6 887.5 752.2 C889.8 751.8 893.5 751.6 895 753.5 C896.5 755.4 894.5 761.4 896.2 763.5 C897.9 765.6 902.9 764.3 905 766 C907.1 767.7 908.8 771.0 908.8 773.5 C908.8 776.0 907.3 778.5 905 781 C902.7 783.5 898.8 785.6 895 788.5 C891.2 791.4 886.2 796.0 882.5 798.5 C878.8 801.0 874.6 803.9 872.5 803.5 C870.4 803.1 868.8 798.9 870 796 C871.2 793.1 877.1 788.9 880 786 C882.9 783.1 886.7 781.8 887.5 778.5 C888.3 775.2 886.0 769.8 885 766 C884.0 762.2 881.8 757.7 881.2 756" fill="none" stroke="#f1f238" stroke-width="1.2"/>
<path d="M1010 756 C1010.8 755.0 1012.1 750.2 1015 749.8 C1017.9 749.4 1022.9 752.0 1027.5 753.5 C1032.1 755.0 1038.3 756.4 1042.5 758.5 C1046.7 760.6 1051.2 763.5 1052.5 766 C1053.8 768.5 1051.2 773.1 1050 773.5 C1048.8 773.9 1046.7 767.7 1045 768.5 C1043.3 769.3 1042.1 776.0 1040 778.5 C1037.9 781.0 1034.6 783.9 1032.5 783.5 C1030.4 783.1 1029.8 778.1 1027.5 776 C1025.2 773.9 1021.5 773.3 1018.8 771 C1016.1 768.7 1012.7 764.7 1011.2 762.2 C1009.7 759.7 1010.2 757.0 1010 756" fill="none" stroke="#f1f238" stroke-width="1.2"/>
<path d="M990.6 443 C991.8 442.4 995.9 439.8 997.5 439.2 C999.1 438.6 999.1 440.4 1000 439.2 C1000.9 438.0 1001.4 433.9 1003.1 431.8 C1004.8 429.7 1007.4 428.1 1010 426.8 C1012.6 425.5 1015.5 424.5 1018.8 424.2 C1022.1 423.9 1026.5 424.3 1030 424.9 C1033.5 425.5 1037.3 426.6 1040 428 C1042.7 429.4 1044.7 431.1 1046.2 433 C1047.7 434.9 1048.8 437.5 1048.8 439.2 C1048.8 440.9 1048.1 442.2 1046.2 443 C1044.3 443.8 1041.9 443.5 1037.5 444.2 C1033.1 444.9 1026.0 446.2 1020 447.4 C1014.0 448.5 1005.2 451.0 1001.2 451.1 C997.2 451.2 998.0 449.4 996.2 448 C994.4 446.6 991.5 443.8 990.6 443" fill="none" stroke="#f1f238" stroke-width="1.2"/>
<path d="M983.8 775.2 C985.2 774.8 989.8 774.2 992.5 772.8 C995.2 771.3 997.7 765.9 1000 766.5 C1002.3 767.1 1004.7 773.8 1006.2 776.5 C1007.7 779.2 1009.4 781.3 1008.8 782.8 C1008.2 784.2 1004.8 785.4 1002.5 785.2 C1000.2 785.0 997.9 782.3 995 781.5 C992.1 780.7 986.9 781.2 985 780.2 C983.1 779.2 984.0 776.0 983.8 775.2" fill="none" stroke="#f1f238" stroke-width="1.2"/>
<path d="M928.8 819 C929.4 817.8 930.6 812.5 932.5 811.5 C934.4 810.5 937.9 813.6 940 812.8 C942.1 812.0 943.1 806.3 945 806.5 C946.9 806.7 950.6 810.2 951.2 814 C951.8 817.8 948.4 824.0 948.8 829 C949.2 834.0 953.4 839.0 953.8 844 C954.2 849.0 951.0 853.2 951.2 859 C951.4 864.8 954.2 870.2 955 879 C955.8 887.8 959.5 906.5 956.2 912 C952.9 917.5 938.5 916.7 935 912 C931.5 907.3 935.8 891.6 935 884 C934.2 876.4 931.6 872.8 930 866.5 C928.4 860.2 926.3 853.6 925.5 846.5 C924.7 839.4 925.1 827.8 925 824" fill="none" stroke="#f1f238" stroke-width="1.1"/>
<path d="M750 912 C751.7 910.2 755.0 903.7 760 901.5 C765.0 899.3 774.2 898.6 780 899 C785.8 899.4 790.0 904.4 795 904 C800.0 903.6 806.7 896.9 810 896.5 C813.3 896.1 815.8 898.9 815 901.5 C814.2 904.1 806.7 910.2 805 912" fill="none" stroke="#f1f238" stroke-width="1.1"/>
<path d="M1006.2 458 C1007.2 457.6 1009.4 456.4 1012.5 455.5 C1015.6 454.6 1020.2 453.2 1025 452.4 C1029.8 451.6 1035.4 450.6 1041.2 450.5 C1047.0 450.4 1054.8 451.0 1060 451.8 C1065.2 452.6 1068.3 453.6 1072.5 455.5 C1076.7 457.4 1080.2 460.3 1085 463 C1089.8 465.7 1096.0 469.5 1101.2 471.8 C1106.4 474.1 1112.0 475.1 1116.2 476.8 C1120.4 478.5 1123.9 479.7 1126.2 481.8 C1128.5 483.9 1129.2 487.5 1130 489.2 C1130.8 490.9 1131.0 491.5 1131.2 492" fill="none" stroke="#f1f238" stroke-width="1.3"/>
<path d="M948.5 719.8 C948.4 720.3 948.3 721.9 947.815 722.861 C947.4 723.8 946.7 724.7 945.864 725.457 C945.1 726.2 944.0 726.8 942.944 727.191 C941.9 727.6 940.6 727.8 939.5 727.8 C938.4 727.8 937.1 727.6 936.056 727.191 C935.0 726.8 933.9 726.2 933.136 725.457 C932.3 724.7 931.6 723.8 931.185 722.861 C930.7 721.9 930.5 720.8 930.5 719.8 C930.5 718.8 930.7 717.7 931.185 716.739 C931.6 715.8 932.3 714.9 933.136 714.143 C933.9 713.4 935.0 712.8 936.056 712.409 C937.1 712.0 938.4 711.8 939.5 711.8 C940.6 711.8 941.9 712.0 942.944 712.409 C944.0 712.8 945.1 713.4 945.864 714.143 C946.7 714.9 947.4 715.8 947.815 716.739 C948.3 717.7 948.4 719.3 948.5 719.8" fill="none" stroke="#f1f238" stroke-width="1.1"/>
<path d="M952.5 744.8 C952.7 742.1 951.7 732.0 953.8 728.5 C955.9 725.0 962.3 726.0 965 723.5 C967.7 721.0 968.8 714.8 970 713.5 C971.2 712.2 972.9 713.1 972.5 716 C972.1 718.9 970.0 726.8 967.5 731 C965.0 735.2 960.0 738.7 957.5 741 C955.0 743.3 953.3 744.2 952.5 744.8" fill="none" stroke="#f1f238" stroke-width="1.1"/>
<path d="M927.5 766 C928.3 764.3 929.6 758.9 932.5 756 C935.4 753.1 941.7 749.5 945 748.5 C948.3 747.5 952.5 747.7 952.5 749.8 C952.5 751.9 946.2 759.1 945 761" fill="none" stroke="#f1f238" stroke-width="1.1"/>
<path d="M980 736 C982.1 736.8 989.4 738.1 992.5 741 C995.6 743.9 998.0 748.9 998.8 753.5 C999.6 758.1 1000.2 765.2 997.5 768.5 C994.8 771.8 986.7 771.4 982.5 773.5 C978.3 775.6 975.4 778.1 972.5 781 C969.6 783.9 966.7 791.4 965 791 C963.3 790.6 962.1 783.5 962.5 778.5 C962.9 773.5 966.7 765.6 967.5 761 C968.3 756.4 967.5 752.7 967.5 751" fill="none" stroke="#f1f238" stroke-width="1.1"/>
<path d="M997.5 768.5 L1007.5 766" fill="none" stroke="#f1f238" stroke-width="1.1"/>
<path d="M998.8 753.5 L1011.2 752.2" fill="none" stroke="#f1f238" stroke-width="1.1"/>
<path d="M1020 741 C1021.7 740.2 1026.7 735.8 1030 736 C1033.3 736.2 1037.1 739.9 1040 742.2 C1042.9 744.5 1046.2 748.5 1047.5 749.8" fill="none" stroke="#f1f238" stroke-width="1.1"/>
<path d="M967.5 647.2 C969.2 647.0 975.4 642.0 977.5 646 C979.6 650.0 978.1 666.4 980 671 C981.9 675.6 987.3 673.1 988.8 673.5" fill="none" stroke="#f1f238" stroke-width="1.1"/>
<path d="M870 794 C869.2 797.3 866.7 807.3 865 814 C863.3 820.7 861.5 826.9 860 834 C858.5 841.1 858.7 849.8 856.2 856.5 C853.7 863.2 849.8 868.6 845 874 C840.2 879.4 833.3 884.4 827.5 889 C821.7 893.6 815.4 899.0 810 901.5 C804.6 904.0 797.5 903.6 795 904" fill="none" stroke="#f1f238" stroke-width="1.1"/>
<path d="M323 240 L332.5 223.8 L342.5 226.2 L347.5 233 L358.8 235 L367.5 248 L355 265 L356.2 286.2 L373.8 302.5 L372.5 320 L355 325 L365 346.2 L490 378" fill="none" stroke="#4f5660" stroke-width="0.9" stroke-opacity=".68"/>
<path d="M490 378 C496.2 377.7 518.3 377.5 527.5 376.2 C536.7 374.9 540.0 373.9 545 370 C550.0 366.1 552.9 359.6 557.5 352.5 C562.1 345.4 566.2 333.8 572.5 327.5 C578.8 321.2 585.0 320.0 595 315 C605.0 310.0 620.0 301.9 632.5 297.5 C645.0 293.1 659.6 290.5 670 288.8 C680.4 287.1 686.7 287.3 695 287.5 C703.3 287.7 715.8 289.6 720 290" fill="none" stroke="#4f5660" stroke-width="0.9" stroke-opacity=".68"/>
<path d="M720 352 C715.6 352.3 700.5 351.6 693.8 353.8 C687.1 356.0 682.2 361.0 680 365 C677.8 369.0 680.4 367.5 680.5 378 C680.6 388.5 680.6 411.8 680.6 428 C680.6 444.2 680.3 466.5 680.6 475.5 C680.9 484.5 681.4 479.7 682.5 481.8 C683.6 483.9 685.6 486.4 687.5 488 C689.4 489.6 691.5 491.3 693.8 491.1 C696.1 490.9 698.1 490.2 701.2 486.8 C704.3 483.4 707.9 477.8 712.5 470.5 C717.1 463.2 724.4 448.8 728.8 443 C733.2 437.2 731.9 438.2 738.8 435.5 C745.7 432.8 758.5 430.1 770 426.8 C781.5 423.5 795.0 418.6 807.5 415.5 C820.0 412.4 836.0 409.9 845 408 C854.0 406.1 853.9 407.1 861.2 404.2 C868.5 401.3 879.6 394.9 888.8 390.5 C898.0 386.1 911.6 380.1 916.2 378" fill="none" stroke="#4f5660" stroke-width="0.9" stroke-opacity=".68"/>
<path d="M856.2 156.2 L875 195 L920 336.2 L935 365" fill="none" stroke="#4f5660" stroke-width="0.9" stroke-opacity=".68"/>
<path d="M863.8 161.2 L880 200 L905 262.5 L937.5 360" fill="none" stroke="#4f5660" stroke-width="0.9" stroke-opacity=".68"/>
<path d="M920 336.2 L945 328.8" fill="none" stroke="#4f5660" stroke-width="0.9" stroke-opacity=".68"/>
<path d="M937.5 378 C938.8 373.3 942.3 363.0 945 350 C947.7 337.0 951.7 312.5 953.8 300 C955.9 287.5 954.8 281.0 957.5 275 C960.2 269.0 966.2 266.1 970 263.8 C973.8 261.5 976.2 261.0 980 261.2 C983.8 261.4 987.9 261.9 992.5 265 C997.1 268.1 1000.8 270.8 1007.5 280 C1014.2 289.2 1025.0 307.1 1032.5 320 C1040.0 332.9 1047.7 347.8 1052.5 357.5 C1057.3 367.2 1059.8 374.6 1061.2 378" fill="none" stroke="#4f5660" stroke-width="0.9" stroke-opacity=".68"/>
<path d="M955 340 C955.8 337.5 958.5 332.5 960 325 C961.5 317.5 962.5 302.5 963.8 295 C965.0 287.5 964.8 283.4 967.5 280 C970.2 276.6 975.8 274.7 980 274.5 C984.2 274.3 987.5 274.6 992.5 278.8 C997.5 283.1 1003.3 289.8 1010 300 C1016.7 310.2 1026.2 327.0 1032.5 340 C1038.8 353.0 1045.0 371.7 1047.5 378" fill="none" stroke="#4f5660" stroke-width="0.9" stroke-opacity=".68"/>
<path d="M720 290 L752.5 306.2 L762.5 320 L762.5 342.5 L750 350 L730 353.8 L720 352.5" fill="none" stroke="#4f5660" stroke-width="0.9" stroke-opacity=".68"/>
<path d="M720 343.8 C722.9 343.9 732.3 345.6 737.5 344.5 C742.7 343.4 748.6 340.8 751.2 337.5 C753.8 334.2 753.6 328.1 753 325 C752.4 321.9 753.0 322.5 747.5 318.8 C742.0 315.1 728.8 305.9 720 303 C711.2 300.1 703.3 301.2 695 301.2 C686.7 301.2 678.3 301.5 670 303 C661.7 304.5 649.2 308.8 645 310" fill="none" stroke="#4f5660" stroke-width="0.9" stroke-opacity=".68"/>
<path d="M892.5 378 L935 365 L945 350" fill="none" stroke="#4f5660" stroke-width="0.9" stroke-opacity=".68"/>
<path d="M1120 343.8 L1170 322.5 L1202.5 297.5 L1210 280 L1240 257.5 L1260 248.8 L1263.8 244.5" fill="none" stroke="#4f5660" stroke-width="0.9" stroke-opacity=".68"/>
<path d="M1152.5 345 L1195 315 L1220 275 L1257.5 250" fill="none" stroke="#4f5660" stroke-width="0.9" stroke-opacity=".68"/>
<path d="M1510 156.2 C1506.7 161.4 1494.8 176.0 1490 187.5 C1485.2 199.0 1482.5 214.6 1481.2 225 C1480.0 235.4 1480.6 240.8 1482.5 250 C1484.4 259.2 1489.2 270.8 1492.5 280 C1495.8 289.2 1499.6 296.7 1502.5 305 C1505.4 313.3 1507.9 322.5 1510 330 C1512.1 337.5 1514.6 342.0 1515 350 C1515.4 358.0 1514.0 371.3 1512.5 378 C1511.0 384.7 1507.2 388.0 1506.2 390" fill="none" stroke="#4f5660" stroke-width="0.9" stroke-opacity=".68"/>
<path d="M1513 156.2 C1509.7 161.4 1497.8 176.0 1493 187.5 C1488.2 199.0 1485.5 214.6 1484.2 225 C1483.0 235.4 1483.6 240.8 1485.5 250 C1487.4 259.2 1492.2 270.8 1495.5 280 C1498.8 289.2 1502.6 296.7 1505.5 305 C1508.4 313.3 1510.9 322.5 1513 330 C1515.1 337.5 1517.6 342.0 1518 350 C1518.4 358.0 1517.0 371.3 1515.5 378 C1514.0 384.7 1510.2 388.0 1509.2 390" fill="none" stroke="#4f5660" stroke-width="0.9" stroke-opacity=".68"/>
<path d="M1120 352.5 L1157.5 352.5 L1167.5 367.5 L1170 378 L1172 392.5" fill="none" stroke="#4f5660" stroke-width="0.9" stroke-opacity=".68"/>
<path d="M1152.5 345 L1162.5 357.5 L1173.8 378 L1178.8 392.5" fill="none" stroke="#4f5660" stroke-width="0.9" stroke-opacity=".68"/>
<path d="M323 410.5 C326.7 413.4 337.6 425.3 345 428 C352.4 430.7 359.2 425.3 367.5 426.8 C375.8 428.3 384.6 432.0 395 436.8 C405.4 441.6 417.5 451.6 430 455.5 C442.5 459.4 457.5 460.1 470 460.5 C482.5 460.9 494.8 459.4 505 458 C515.2 456.6 526.8 452.8 531.2 451.8" fill="none" stroke="#4f5660" stroke-width="0.9" stroke-opacity=".68"/>
<path d="M509.2 502.2 L482.5 528 L447.5 545.5 L425 551.8 L380 546.8 L323 583" fill="none" stroke="#4f5660" stroke-width="0.9" stroke-opacity=".68"/>
<path d="M323 588 L342.5 606" fill="none" stroke="#4f5660" stroke-width="0.9" stroke-opacity=".68"/>
<path d="M380 546.8 L595 734.8 L720 844 L760 879 L800 912" fill="none" stroke="#4f5660" stroke-width="0.9" stroke-opacity=".68"/>
<path d="M422.5 553 L483.8 606 L720 811 L745 834 L830 912" fill="none" stroke="#4f5660" stroke-width="0.9" stroke-opacity=".68"/>
<path d="M448.8 546 L517.5 606 L720 781 L790 834 L845 880" fill="none" stroke="#4f5660" stroke-width="0.9" stroke-opacity=".68"/>
<path d="M593.3 573.5 L632.5 606 L700 660.6 L738.8 693 L758.8 708.8 L808.8 754 L885 800" fill="none" stroke="#4f5660" stroke-width="0.9" stroke-opacity=".68"/>
<path d="M758.8 708.8 L790.6 668 L865 754 L895 790" fill="none" stroke="#4f5660" stroke-width="0.9" stroke-opacity=".68"/>
<path d="M769.4 695.6 L834.4 754 L880 795" fill="none" stroke="#4f5660" stroke-width="0.9" stroke-opacity=".68"/>
<path d="M522.5 673 L455 731" fill="none" stroke="#4f5660" stroke-width="0.9" stroke-opacity=".68"/>
<path d="M595 734.8 L517.5 791 L501.2 802.2" fill="none" stroke="#4f5660" stroke-width="0.9" stroke-opacity=".68"/>
<path d="M595 734.8 L623.8 912" fill="none" stroke="#4f5660" stroke-width="0.9" stroke-opacity=".68"/>
<path d="M501.2 801.5 L501.2 849 L485 912" fill="none" stroke="#4f5660" stroke-width="0.9" stroke-opacity=".68"/>
<path d="M345 606 L377.5 641 L402.5 662.2 L431.2 701 L448.8 723.5 L465 749.8 L481.2 782.2 L501.2 802.2" fill="none" stroke="#4f5660" stroke-width="0.9" stroke-opacity=".68"/>
<path d="M323 646 L352.5 617.2" fill="none" stroke="#4f5660" stroke-width="0.9" stroke-opacity=".68"/>
<path d="M323 739.8 L402.5 662.2" fill="none" stroke="#4f5660" stroke-width="0.9" stroke-opacity=".68"/>
<path d="M330 801 L431.2 701" fill="none" stroke="#4f5660" stroke-width="0.9" stroke-opacity=".68"/>
<path d="M360 817.2 L448.8 723.5" fill="none" stroke="#4f5660" stroke-width="0.9" stroke-opacity=".68"/>
<path d="M390 834 L465 750.2" fill="none" stroke="#4f5660" stroke-width="0.9" stroke-opacity=".68"/>
<path d="M420 851.5 L481.2 782.8" fill="none" stroke="#4f5660" stroke-width="0.9" stroke-opacity=".68"/>
<path d="M441.2 872.8 L501.2 801.5" fill="none" stroke="#4f5660" stroke-width="0.9" stroke-opacity=".68"/>
<path d="M460 899 L500 850.2" fill="none" stroke="#4f5660" stroke-width="0.9" stroke-opacity=".68"/>
<path d="M323 801.5 L357.5 820.2 L387.5 836.5 L420 851.5 L427.5 859 L470 912" fill="none" stroke="#4f5660" stroke-width="0.9" stroke-opacity=".68"/>
<path d="M323 809 L355 826.5 L385 841.5 L416.2 855.2" fill="none" stroke="#4f5660" stroke-width="0.9" stroke-opacity=".68"/>
<path d="M323 861.5 L357.5 821.5" fill="none" stroke="#4f5660" stroke-width="0.9" stroke-opacity=".68"/>
<path d="M323 906.5 L385 839" fill="none" stroke="#4f5660" stroke-width="0.9" stroke-opacity=".68"/>
<path d="M367.5 912 L416.2 855.2" fill="none" stroke="#4f5660" stroke-width="0.9" stroke-opacity=".68"/>
<path d="M668.8 394.2 C668.8 407.1 668.4 456.8 668.8 471.8 C669.2 486.8 669.3 479.7 671.2 484.2 C673.1 488.7 676.7 496.0 680 498.8 C683.3 501.6 687.5 501.2 691.2 501.2 C695.0 501.2 699.0 500.3 702.5 498.8 C706.0 497.3 709.6 495.5 712.5 492 C715.4 488.5 717.1 482.8 720 478 C722.9 473.2 726.9 467.6 730 463 C733.1 458.4 735.0 453.8 738.8 450.5 C742.5 447.2 747.3 445.6 752.5 443.5 C757.7 441.4 760.8 440.6 770 438 C779.2 435.4 795.0 430.9 807.5 428 C820.0 425.1 835.6 422.8 845 420.5 C854.4 418.2 857.5 416.9 863.8 414.2 C870.0 411.5 873.1 408.6 882.5 404.2 C891.9 399.8 910.8 392.4 920 388 C929.2 383.6 934.6 379.7 937.5 378" fill="none" stroke="#4f5660" stroke-width="0.9" stroke-opacity=".68"/>
<path d="M937.5 378 L970 465.5 L977.5 488 L970 498 L962.5 518 L972.5 523 L972.5 558 L980 606" fill="none" stroke="#4f5660" stroke-width="0.9" stroke-opacity=".68"/>
<path d="M945 378 L972.5 460.5 L980 478" fill="none" stroke="#4f5660" stroke-width="0.9" stroke-opacity=".68"/>
<path d="M1007.5 464.2 L1070 434.2 L1085 433 L1110 430.5 L1127.5 414.2 L1125 378" fill="none" stroke="#4f5660" stroke-width="0.9" stroke-opacity=".68"/>
<path d="M1050 378 L1058.8 403 L1070 425.5 L1072.5 433" fill="none" stroke="#4f5660" stroke-width="0.9" stroke-opacity=".68"/>
<path d="M1062.5 378 L1070 403 L1078.8 425.5 L1087.5 431.8" fill="none" stroke="#4f5660" stroke-width="0.9" stroke-opacity=".68"/>
<path d="M1113.8 435.5 L1135 453" fill="none" stroke="#4f5660" stroke-width="0.9" stroke-opacity=".68"/>
<path d="M1006 462 L1137 575" fill="none" stroke="#4f5660" stroke-width="0.9" stroke-opacity=".68"/>
<path d="M996 477 L1137 600" fill="none" stroke="#4f5660" stroke-width="0.9" stroke-opacity=".68"/>
<path d="M988 490 L1137 625" fill="none" stroke="#4f5660" stroke-width="0.9" stroke-opacity=".68"/>
<path d="M984 500 L1137 650" fill="none" stroke="#4f5660" stroke-width="0.9" stroke-opacity=".68"/>
<path d="M981 515 L1137 672" fill="none" stroke="#4f5660" stroke-width="0.9" stroke-opacity=".68"/>
<path d="M981 532 L1137 700" fill="none" stroke="#4f5660" stroke-width="0.9" stroke-opacity=".68"/>
<path d="M981 550 L1120 690" fill="none" stroke="#4f5660" stroke-width="0.9" stroke-opacity=".68"/>
<path d="M984 570 L1090 675" fill="none" stroke="#4f5660" stroke-width="0.9" stroke-opacity=".68"/>
<path d="M990 590 L1060 660" fill="none" stroke="#4f5660" stroke-width="0.9" stroke-opacity=".68"/>
<path d="M1030 458 L1137 545" fill="none" stroke="#4f5660" stroke-width="0.9" stroke-opacity=".68"/>
<path d="M1060 455 L1137 520" fill="none" stroke="#4f5660" stroke-width="0.9" stroke-opacity=".68"/>
<path d="M990 488 C992.9 490.5 1000.4 498.8 1007.5 503 C1014.6 507.2 1022.1 507.2 1032.5 513 C1042.9 518.8 1058.8 529.7 1070 538 C1081.2 546.3 1093.3 555.1 1100 563 C1106.7 570.9 1107.3 581.2 1110 585.5 C1112.7 589.8 1114.3 585.1 1116.2 588.8 C1118.1 592.5 1122.2 600.6 1121.2 607.5 C1120.2 614.4 1114.0 621.7 1110 630 C1106.0 638.3 1101.7 651.0 1097.5 657.5 C1093.3 664.0 1091.2 666.3 1085 668.8 C1078.8 671.3 1070.4 674.0 1060 672.5 C1049.6 671.0 1032.9 662.1 1022.5 660 C1012.1 657.9 1001.7 660.0 997.5 660" fill="none" stroke="#4f5660" stroke-width="0.9" stroke-opacity=".68"/>
<path d="M1007.5 464.2 C1013.8 464.0 1034.6 460.7 1045 463 C1055.4 465.3 1061.7 471.3 1070 478 C1078.3 484.7 1086.7 496.3 1095 503 C1103.3 509.7 1115.8 515.5 1120 518" fill="none" stroke="#4f5660" stroke-width="0.9" stroke-opacity=".68"/>
<path d="M1112.5 585.6 C1112.9 588.2 1116.5 594.6 1115 601.2 C1113.5 607.8 1107.8 616.5 1103.8 625 C1099.8 633.5 1095.6 645.4 1091.2 652.5 C1086.8 659.6 1084.8 664.6 1077.5 667.5 C1070.2 670.4 1055.4 670.8 1047.5 670 C1039.6 669.2 1038.3 663.5 1030 662.5 C1021.7 661.5 1002.9 663.6 997.5 663.8" fill="none" stroke="#4f5660" stroke-width="0.9" stroke-opacity=".68"/>
<path d="M988.8 606 L991.2 643.5 L996.2 666 L988.8 696 L978.8 726 L995 736 L1020 746 L1052.5 763.5 L1120 781" fill="none" stroke="#4f5660" stroke-width="0.9" stroke-opacity=".68"/>
<path d="M1052.5 684 L1070 729 L1065 746.5 L1052.5 764 L1060 766.5 L1132.5 781.5" fill="none" stroke="#4f5660" stroke-width="0.9" stroke-opacity=".68"/>
<path d="M1067.5 694 L1132.5 746.5" fill="none" stroke="#4f5660" stroke-width="0.9" stroke-opacity=".68"/>
<path d="M1085 684 L1132.5 721.5" fill="none" stroke="#4f5660" stroke-width="0.9" stroke-opacity=".68"/>
<path d="M882.5 796.5 L872.5 824 L860 881.5 L870 881.5 L880 859 L892.5 834 L892.5 801.5" fill="none" stroke="#4f5660" stroke-width="0.9" stroke-opacity=".68"/>
<path d="M883.8 851.5 L917.5 847.8 L915 877.8 L885 881.5 L883.8 851.5" fill="none" stroke="#4f5660" stroke-width="0.9" stroke-opacity=".68"/>
<path d="M896.2 890.2 L932.5 886.5" fill="none" stroke="#4f5660" stroke-width="0.9" stroke-opacity=".68"/>
<path d="M895 801.5 L905 801.5 L906.2 814 L896.2 815.2 L895 801.5" fill="none" stroke="#4f5660" stroke-width="0.9" stroke-opacity=".68"/>
<path d="M323 694.8 L376.2 641" stroke="#1e8a1e" stroke-width="1" fill="none"/>
<path d="M900 842.8 L917.5 840.2" stroke="#1e9a3e" stroke-width="1" fill="none"/>
<path d="M425 551.8 L447.5 545.5" stroke="#14a070" stroke-width="1" fill="none"/>
<path d="M582.5 336.3 L674.5 328.3 L670 359.5 L666.3 388 L660 438.5 L652 442.5 L590 480.5 L609.5 547.5 L593.3 573.5 L509.3 502.3 L534.5 449.3Z" fill="none" stroke="#4b8cf5" stroke-width="3.6" stroke-opacity=".7" stroke-linejoin="round"/>
<path d="M582.5 336.3 L674.5 328.3 L670 359.5 L666.3 388 L660 438.5 L652 442.5 L590 480.5 L609.5 547.5 L593.3 573.5 L509.3 502.3 L534.5 449.3Z" fill="none" stroke="#5b6a86" stroke-width="0.9" stroke-opacity=".8"/>
<rect x="-6" y="-2" width="12" height="4" fill="#1585ee" stroke="#1b3f7a" stroke-width=".8" transform="translate(628.5 332.3) rotate(-5.0)"/>
<rect x="-6" y="-2" width="12" height="4" fill="#1585ee" stroke="#1b3f7a" stroke-width=".8" transform="translate(672.2 343.9) rotate(98.2)"/>
<rect x="-6" y="-2" width="12" height="4" fill="#1585ee" stroke="#1b3f7a" stroke-width=".8" transform="translate(668.1 373.8) rotate(97.4)"/>
<rect x="-6" y="-2" width="12" height="4" fill="#1585ee" stroke="#1b3f7a" stroke-width=".8" transform="translate(663.1 413.2) rotate(97.1)"/>
<rect x="-6" y="-2" width="12" height="4" fill="#1585ee" stroke="#1b3f7a" stroke-width=".8" transform="translate(621.0 461.5) rotate(148.5)"/>
<rect x="-6" y="-2" width="12" height="4" fill="#1585ee" stroke="#1b3f7a" stroke-width=".8" transform="translate(599.8 514.0) rotate(73.8)"/>
<rect x="-6" y="-2" width="12" height="4" fill="#1585ee" stroke="#1b3f7a" stroke-width=".8" transform="translate(601.4 560.5) rotate(121.9)"/>
<rect x="-6" y="-2" width="12" height="4" fill="#1585ee" stroke="#1b3f7a" stroke-width=".8" transform="translate(551.3 537.9) rotate(-139.7)"/>
<rect x="-6" y="-2" width="12" height="4" fill="#1585ee" stroke="#1b3f7a" stroke-width=".8" transform="translate(521.9 475.8) rotate(-64.6)"/>
<rect x="-6" y="-2" width="12" height="4" fill="#1585ee" stroke="#1b3f7a" stroke-width=".8" transform="translate(558.5 392.8) rotate(-67.0)"/>
<rect x="577.5" y="331.3" width="10" height="10" fill="#1b8af2" stroke="#1b3f7a" stroke-width=".9"/>
<rect x="669.5" y="323.3" width="10" height="10" fill="#1b8af2" stroke="#1b3f7a" stroke-width=".9"/>
<rect x="665.0" y="354.5" width="10" height="10" fill="#1b8af2" stroke="#1b3f7a" stroke-width=".9"/>
<rect x="661.3" y="383.0" width="10" height="10" fill="#1b8af2" stroke="#1b3f7a" stroke-width=".9"/>
<rect x="655.0" y="433.5" width="10" height="10" fill="#1b8af2" stroke="#1b3f7a" stroke-width=".9"/>
<rect x="647.0" y="437.5" width="10" height="10" fill="#1b8af2" stroke="#1b3f7a" stroke-width=".9"/>
<rect x="585.0" y="475.5" width="10" height="10" fill="#1b8af2" stroke="#1b3f7a" stroke-width=".9"/>
<rect x="604.5" y="542.5" width="10" height="10" fill="#1b8af2" stroke="#1b3f7a" stroke-width=".9"/>
<rect x="588.3" y="568.5" width="10" height="10" fill="#1b8af2" stroke="#1b3f7a" stroke-width=".9"/>
<rect x="504.3" y="497.3" width="10" height="10" fill="#1b8af2" stroke="#1b3f7a" stroke-width=".9"/>
<rect x="529.5" y="444.3" width="10" height="10" fill="#1b8af2" stroke="#1b3f7a" stroke-width=".9"/>
<text x="571" y="468" font-size="6.3" fill="#6d6d78" fill-opacity=".8" text-anchor="middle" font-family="Liberation Sans,sans-serif">2893/1</text>
<text x="380" y="480" font-size="6.3" fill="#6d6d78" fill-opacity=".8" text-anchor="middle" font-family="Liberation Sans,sans-serif">2893/2</text>
<text x="1000" y="387" font-size="6.3" fill="#6d6d78" fill-opacity=".8" text-anchor="middle" font-family="Liberation Sans,sans-serif">2838/1</text>
<text x="875" y="199" font-size="6.3" fill="#6d6d78" fill-opacity=".8" text-anchor="middle" font-family="Liberation Sans,sans-serif">13/60</text>
<text x="713" y="335" font-size="6.3" fill="#6d6d78" fill-opacity=".8" text-anchor="middle" font-family="Liberation Sans,sans-serif">2893/2</text>
<text x="418" y="631" font-size="6.3" fill="#6d6d78" fill-opacity=".8" text-anchor="middle" font-family="Liberation Sans,sans-serif">2896</text>
<text x="656" y="679" font-size="6.3" fill="#6d6d78" fill-opacity=".8" text-anchor="middle" font-family="Liberation Sans,sans-serif">2885</text>
<text x="606" y="727" font-size="6.3" fill="#6d6d78" fill-opacity=".8" text-anchor="middle" font-family="Liberation Sans,sans-serif">2893</text>
<text x="523" y="744" font-size="6.3" fill="#6d6d78" fill-opacity=".8" text-anchor="middle" font-family="Liberation Sans,sans-serif">2895</text>
<text x="656" y="747" font-size="6.3" fill="#14a070" fill-opacity=".8" text-anchor="middle" font-family="Liberation Sans,sans-serif">2884</text>
<text x="553" y="829" font-size="6.3" fill="#6d6d78" fill-opacity=".8" text-anchor="middle" font-family="Liberation Sans,sans-serif">2900</text>
<text x="672" y="869" font-size="6.3" fill="#6d6d78" fill-opacity=".8" text-anchor="middle" font-family="Liberation Sans,sans-serif">2914</text>
<text x="375" y="726" font-size="6.3" fill="#6d6d78" fill-opacity=".8" text-anchor="middle" font-family="Liberation Sans,sans-serif">3284/1846</text>
<text x="376" y="777" font-size="6.3" fill="#6d6d78" fill-opacity=".8" text-anchor="middle" font-family="Liberation Sans,sans-serif">3284/1847</text>
<text x="426" y="769" font-size="6.3" fill="#6d6d78" fill-opacity=".8" text-anchor="middle" font-family="Liberation Sans,sans-serif">3284/1855</text>
<text x="432" y="813" font-size="6.3" fill="#6d6d78" fill-opacity=".8" text-anchor="middle" font-family="Liberation Sans,sans-serif">3284/1854</text>
<text x="458" y="853" font-size="6.3" fill="#6d6d78" fill-opacity=".8" text-anchor="middle" font-family="Liberation Sans,sans-serif">3284/1851</text>
<text x="470" y="866" font-size="6.3" fill="#6d6d78" fill-opacity=".8" text-anchor="middle" font-family="Liberation Sans,sans-serif">3284/1852</text>
<text x="488" y="876" font-size="6.3" fill="#6d6d78" fill-opacity=".8" text-anchor="middle" font-family="Liberation Sans,sans-serif">3284/1857</text>
<text x="1022" y="715" font-size="6.3" fill="#6d6d78" fill-opacity=".8" text-anchor="middle" font-family="Liberation Sans,sans-serif">2917/1</text>
<text x="1092" y="741" font-size="6.3" fill="#6d6d78" fill-opacity=".8" text-anchor="middle" font-family="Liberation Sans,sans-serif">2916/75</text>
<text x="825" y="756" font-size="6.3" fill="#6d6d78" fill-opacity=".8" text-anchor="middle" font-family="Liberation Sans,sans-serif">2897</text>
<text x="850" y="754" font-size="6.3" fill="#6d6d78" fill-opacity=".8" text-anchor="middle" font-family="Liberation Sans,sans-serif">2898</text>
<text x="1030" y="493" font-size="6.3" fill="#6d6d78" fill-opacity=".8" text-anchor="middle" font-family="Liberation Sans,sans-serif">2916/7</text>
<text x="1075" y="516" font-size="6.3" fill="#6d6d78" fill-opacity=".8" text-anchor="middle" font-family="Liberation Sans,sans-serif">2916/1</text>
<text x="1005" y="605" font-size="6.3" fill="#6d6d78" fill-opacity=".8" text-anchor="middle" font-family="Liberation Sans,sans-serif">2916/15</text>
<text x="1040" y="619" font-size="6.3" fill="#6d6d78" fill-opacity=".8" text-anchor="middle" font-family="Liberation Sans,sans-serif">2916/17</text>
<text x="1090" y="625" font-size="6.3" fill="#6d6d78" fill-opacity=".8" text-anchor="middle" font-family="Liberation Sans,sans-serif">2916/5</text>
<text x="1095" y="660" font-size="6.3" fill="#6d6d78" fill-opacity=".8" text-anchor="middle" font-family="Liberation Sans,sans-serif">2916/8</text>
<text x="1070" y="580" font-size="6.3" fill="#6d6d78" fill-opacity=".8" text-anchor="middle" font-family="Liberation Sans,sans-serif">2916/2</text>
<text x="990" y="560" font-size="6.3" fill="#6d6d78" fill-opacity=".8" text-anchor="middle" font-family="Liberation Sans,sans-serif">2916/9</text>
<text x="347" y="695" font-size="6.3" fill="#1e8a1e" text-anchor="middle" font-family="Liberation Sans,sans-serif">3284/1841</text>
<text x="909" y="830" font-size="6.3" fill="#1e8a1e" text-anchor="middle" font-family="Liberation Sans,sans-serif">2922/1</text>
<text x="1057" y="167" font-size="14.6" font-family="Liberation Sans,sans-serif" fill="#0a0a0a">Cerkniško jezero</text>
<text x="1339" y="381" font-size="14.6" font-family="Liberation Sans,sans-serif" fill="#0a0a0a">Žerovniščica</text>
<text x="1100" y="403" font-size="14.6" font-family="Liberation Sans,sans-serif" fill="#0a0a0a">Sitarica</text>
<text x="1007" y="580" font-size="14.6" font-family="Liberation Sans,sans-serif" fill="#0a0a0a">Gorica</text>
<text x="815" y="774" font-size="14.6" font-family="Liberation Sans,sans-serif" fill="#0a0a0a">Pretržje</text>
<text x="561" y="878" font-size="14.6" font-family="Liberation Sans,sans-serif" fill="#0a0a0a">Goričice</text>
<text x="0" y="0" font-size="14.6" font-family="Liberation Sans,sans-serif" fill="#0a0a0a" transform="translate(346 404) rotate(50)">Stržen</text>
<text x="0" y="0" font-size="14.6" font-family="Liberation Sans,sans-serif" fill="#0a0a0a" transform="translate(812 441) rotate(-17)">Stržen</text>
<text x="326" y="174" font-size="12" fill="#f4f8ff" font-family="Liberation Sans,sans-serif" textLength="124" lengthAdjust="spacingAndGlyphs">[−][Top][2D Wireframe]</text>
<path d="M342.500 873V912M344 855l6.500 6.500 6.500-6.500M350.500 861.500v7" stroke="#111" stroke-width="1.100" fill="none"/>
<path d="M397 909l6 3M409 909l-6 3" stroke="#111" stroke-width="1" fill="none"/>
<circle cx="1513" cy="260" r="51.5" fill="none" stroke="#fff" stroke-opacity=".17" stroke-width="13"/>
<rect x="1487.5" y="236" width="51" height="51" fill="#c9d6e6" fill-opacity=".9" stroke="#aebccd" stroke-width="1"/>
<rect x="1496" y="251" width="34" height="22" rx="3" fill="#bccbdd" fill-opacity=".8"/>
<path d="M1485 262.500c4-12 10-21.500 27-21.500 16 0 23 12 23 30v16.500" fill="none" stroke="#e4ea7c" stroke-width="1"/>
<path d="M1489.600 287.500c-2-24 6-40 22-40 12 0 15 12 15 26v14" fill="none" stroke="#e4ea7c" stroke-width="1"/>
<text x="1513" y="267" font-size="13.5" fill="#5a6b80" font-family="Liberation Sans,sans-serif" font-weight="bold" text-anchor="middle" textLength="25" lengthAdjust="spacingAndGlyphs">TOP</text>
<text x="1513" y="214" font-size="20" fill="#c3d0e0" fill-opacity=".9" font-family="Liberation Sans,sans-serif" font-weight="bold" text-anchor="middle">N</text>
<text x="1513" y="327" font-size="20" fill="#c3d0e0" fill-opacity=".9" font-family="Liberation Sans,sans-serif" font-weight="bold" text-anchor="middle">S</text>
<text x="1456" y="269" font-size="20" fill="#c3d0e0" fill-opacity=".9" font-family="Liberation Sans,sans-serif" font-weight="bold" text-anchor="middle">W</text>
<text x="1569" y="269" font-size="20" fill="#c3d0e0" fill-opacity=".9" font-family="Liberation Sans,sans-serif" font-weight="bold" text-anchor="middle">E</text>
<rect x="1489.500" y="350" width="47" height="16.500" rx="3" fill="#fff" fill-opacity=".33"/>
<text x="1505.500" y="362.300" font-size="11.500" fill="#6a80a2" text-anchor="middle" font-family="Liberation Sans,sans-serif">WCS</text>
<path d="M1523.500 354.500h8l-4 5.300z" fill="none" stroke="#9fb3cf" stroke-width="1"/>
<rect x="1534" y="171.5" width="11.5" height="4" rx="1" fill="#e9eef5" stroke="#30405a" stroke-width=".9"/>
<path d="M1557 166h9v8h-2v-6h-7z" fill="#e9eef5" stroke="#30405a" stroke-width=".9"/><rect x="1554.3" y="168" width="9" height="8.5" fill="#e9eef5" stroke="#30405a" stroke-width=".9"/><rect x="1557" y="171" width="3.6" height="3.2" fill="#62a3df" stroke="#30405a" stroke-width=".8"/>
<path d="M1574.5 166.5h3.2l2 2.6 2-2.6h3.2l-3.6 4.6 3.8 4.7h-3.3l-2.1-2.8-2.1 2.8h-3.3l3.8-4.7z" fill="#e9eef5" stroke="#30405a" stroke-width=".9"/>
</svg>
</div>
<div class="abs" id="fi"></div>
<div class="abs" id="fiin"></div>
<div class="abs" id="combo">Zemljiško katastrski prikaz(1)</div>
<div class="abs" id="grid">
<div class="abs" style="left:0;top:0;width:14px;height:460px;background:#c9c9c9"></div>
<div class="gh" style="top:0px"><span class="gm"></span>Data Attributes</div>
<div class="gr" style="top:19px"><b style="letter-spacing:-1.12px;word-spacing:2px">PARCELA</b><i>2893/1</i></div>
<div class="gr" style="top:38px"><b style="letter-spacing:-1.17px;word-spacing:2px">ŠIFRA KO</b><i>1678</i></div>
<div class="gr" style="top:57px"><b style="letter-spacing:-0.63px">NAZIV KO</b><i>OTOK II</i></div>
<div class="gr" style="top:76px"><b style="letter-spacing:-1.04px;word-spacing:2px">ŠIFRA DELA KO</b><i>1</i></div>
<div class="gr" style="top:95px"><b style="letter-spacing:-0.44px">ŠIFRA RABE (podatek veljaven do 1.1.2012)</b><i>0</i></div>
<div class="gr" style="top:114px"><b style="letter-spacing:-0.32px">NAZIV RABE (podatek veljaven do 1.1.2012)</b><i>NP</i></div>
<div class="gr" style="top:133px"><b style="letter-spacing:-0.48px">OZNAKA VRSTE RABE (podatek veljaven do 1.1.2012)</b><i>NP</i></div>
<div class="gr" style="top:152px"><b style="letter-spacing:-0.62px">KATASTERSKI RAZRED (podatek veljaven do 1.1.2012)</b><i>0</i></div>
<div class="gr" style="top:171px"><b style="letter-spacing:-0.42px">POVRŠINA POLIGONA (vpisana)</b><i>18358</i></div>
<div class="gr" style="top:190px"><b style="letter-spacing:-1.02px;word-spacing:2px">PRVI DEL PARCELNE ŠT.</b><i>2893</i></div>
<div class="gr" style="top:209px"><b style="letter-spacing:-1.02px;word-spacing:2px">DRUGI DEL PARCELNE ŠT.</b><i>1</i></div>
<div class="gr" style="top:228px"><b style="letter-spacing:-1.22px;word-spacing:2px">VRSTA PARCELE</b><i>0</i></div>
<div class="gr" style="top:247px"><b style="letter-spacing:-0.92px;word-spacing:2px">PARCELA ID</b><i>27491810</i></div>
<div class="gh" style="top:266px"><span class="gm"></span>REN, REGISTER NEPREMIČNIN</div>
<div class="gr" style="top:285px"><b style="letter-spacing:-0.55px">NEPREMIČNINA ID</b><i>2675487</i></div>
<div class="gr" style="top:304px"><b style="letter-spacing:-0.52px">OBČINA</b><i>Cerknica</i></div>
<div class="gr" style="top:323px"><b style="letter-spacing:-1.05px;word-spacing:2px">POVRŠINA PARCELE</b><i>18534</i></div>
<div class="gr" style="top:342px"><b style="letter-spacing:-0.51px">NAMENSKA RABA</b><i>20200-druga kmetijska zemljišča</i></div>
<div class="gr" style="top:361px"><b class="sel" style="letter-spacing:-0.37px">SKUPNA DEJANSKA RABA: po območjih skupne rabe</b><i>10......40..-86.4%;......40..-13.6%</i></div>
<div class="gr" style="top:380px"><b style="letter-spacing:-0.51px">LASTNIK1 MATIČNA ŠT.</b><i></i></div>
<div class="gr" style="top:399px"><b style="letter-spacing:-0.60px">LASTNIK1 NAZIV</b><i></i></div>
<div class="gr" style="top:418px"><b style="letter-spacing:-0.69px">LASTNIK1 NASLOV</b><i></i></div>
<div class="gr" style="top:437px"><b style="letter-spacing:-0.83px;word-spacing:2px">LASTNIK1 DELEŽ</b><i></i></div>
<div class="abs" style="left:395px;top:0;width:17px;height:438px;background:#f0f0f0"></div>
<div class="abs" style="left:395.5px;top:18px;width:16px;height:299px;background:#cdcdcd"></div>
<svg class="abs" style="left:395px;top:0" width="17" height="438" viewBox="0 0 17 438"><path d="M4.500 11.500l4-4 4 4M4.500 426l4 4 4-4" fill="none" stroke="#444" stroke-width="1.800"/></svg>
</div>
<svg class="abs" style="left:1140px;top:392px" width="18" height="56" viewBox="1140 392 18 56"><path d="M1144.200 396.300l7.600 7.400M1151.800 396.300l-7.600 7.400" stroke="#222" stroke-width="2"/><path d="M1144.500 413.500v10" stroke="#222" stroke-width="1.800"/><path d="M1152 414.500v8l-5-4z" fill="#222"/><g stroke="#222" stroke-width="2"><path d="M1148 432.800v10.400M1142.800 438h10.400M1144.300 434.300l7.400 7.400M1151.700 434.300l-7.400 7.400"/></g><circle cx="1148" cy="438" r="3.600" fill="#222"/><circle cx="1148" cy="438" r="1.700" fill="#dadada"/></svg>
<div class="abs" style="left:1138px;top:843px;width:20px;height:0"><span style="position:absolute;left:10px;top:0;white-space:nowrap;transform:translate(-50%,-50%) rotate(-90deg);font-size:12px;letter-spacing:-.87px;color:#4a4a4a">KING.G4C FEATURE INFO</span></div>
<svg class="abs" style="left:1562px;top:404px" width="14" height="12" viewBox="0 0 14 12"><path d="M2 3.500l5 5 5-5" fill="none" stroke="#444" stroke-width="1.300"/></svg>
<div class="abs" id="desc">SKUPNA DEJANSKA RABA: po območjih skupne rabe in delež rabe</div>
<div class="abs" id="frameL"></div><div class="abs" id="frameL2"></div>
<div class="abs" id="frameR2"></div><div class="abs" id="frameR"></div>
</body>
</html>
